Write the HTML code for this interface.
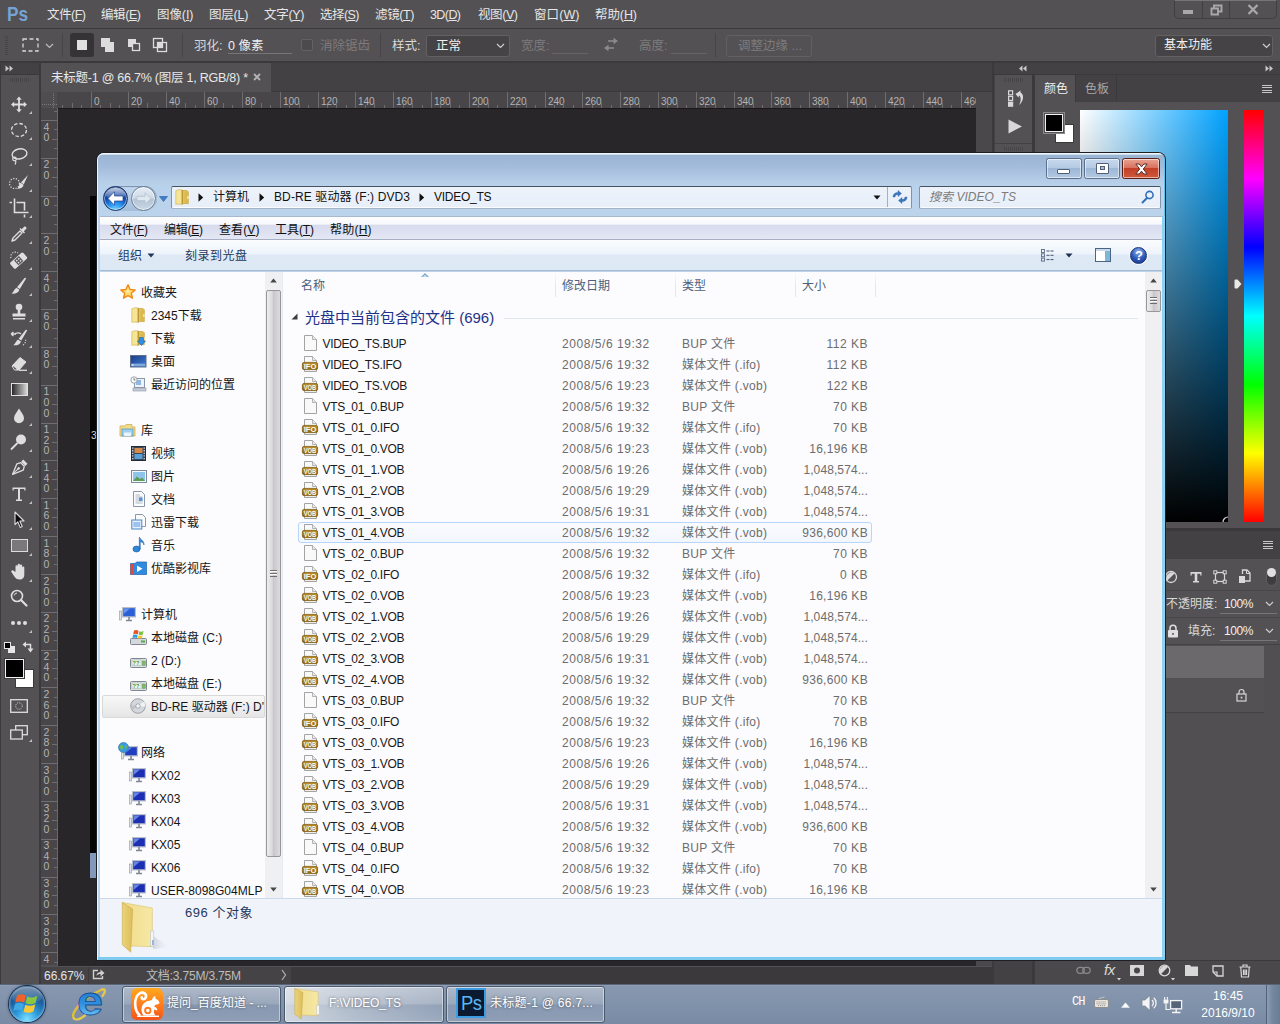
<!DOCTYPE html><html lang="zh-CN"><head><meta charset="utf-8"><title>Photoshop - VIDEO_TS</title><style>
*{box-sizing:border-box;margin:0;padding:0}
html,body{width:1280px;height:1024px;overflow:hidden;background:#535153}
body{position:relative;font-family:"Liberation Sans","Noto Sans CJK SC",sans-serif;font-size:12px;color:#ddd}
.a{position:absolute}
.t{position:absolute;white-space:nowrap;line-height:1}
svg{position:absolute;overflow:visible}
/* photoshop */
#menubar{left:0;top:0;width:1280px;height:28px;background:#535153}
#optbar{left:0;top:29px;width:1280px;height:32px;background:#535153}
.mi{top:9px;font-size:12.5px;color:#e6e6e6}
.ol{font-size:12.5px;color:#d8d8d8}
.dim{color:#7d7b7d}
/* explorer */
#win{left:97px;top:153px;width:1069px;height:807px;border-radius:7px 7px 1px 1px;background:#bfd6ea;overflow:hidden}
.nv{font-size:12px;color:#151515;}
.fr{font-size:12px;color:#1a1a1a;height:21px;line-height:21px}
.g{color:#6d6d6d}
</style></head><body>
<div class="a" id="menubar"></div>
<div class="a" style="left:0;top:28px;width:1280px;height:1px;background:#3b393b"></div>
<div class="t" style="left:7px;top:3px;font-size:21px;font-weight:bold;color:#74a3d4;transform:scaleX(0.82);transform-origin:0 0">Ps</div>
<div class="t mi" style="left:47px;letter-spacing:-0.50px">文件(<u>F</u>)</div>
<div class="t mi" style="left:101px;letter-spacing:-0.42px">编辑(<u>E</u>)</div>
<div class="t mi" style="left:157px;letter-spacing:-0.08px">图像(<u>I</u>)</div>
<div class="t mi" style="left:209px;letter-spacing:-0.20px">图层(<u>L</u>)</div>
<div class="t mi" style="left:264px;letter-spacing:-0.30px">文字(<u>Y</u>)</div>
<div class="t mi" style="left:320px;letter-spacing:-0.55px">选择(<u>S</u>)</div>
<div class="t mi" style="left:375px;letter-spacing:-0.37px">滤镜(<u>T</u>)</div>
<div class="t mi" style="left:430px;letter-spacing:-0.59px">3D(<u>D</u>)</div>
<div class="t mi" style="left:478px;letter-spacing:-0.42px">视图(<u>V</u>)</div>
<div class="t mi" style="left:534px;letter-spacing:0.09px">窗口(<u>W</u>)</div>
<div class="t mi" style="left:595px;letter-spacing:-0.09px">帮助(<u>H</u>)</div>
<div class="a" style="left:1174px;top:0;width:103px;height:19px;border:1px solid #403e40;border-top:1px solid #777577;border-radius:0 0 5px 5px;background:#535153"></div>
<div class="a" style="left:1202px;top:1px;width:1px;height:17px;background:#403e40"></div>
<div class="a" style="left:1229px;top:1px;width:1px;height:17px;background:#403e40"></div>
<div class="a" style="left:1183px;top:10px;width:10px;height:4px;background:#a9a7a9"></div>
<svg style="left:1210px;top:4px" width="13" height="12"><path d="M4 4V1.5H11.5V7.5H8.5M1.5 4.5H8V10.5H1.5Z" fill="none" stroke="#a9a7a9" stroke-width="1.9"/></svg>
<svg style="left:1247px;top:4px" width="12" height="11"><path d="M1.5 1L10.5 10M10.5 1L1.5 10" stroke="#a9a7a9" stroke-width="2.3"/></svg>
<div class="a" id="optbar"></div>
<div class="a" style="left:0;top:61px;width:1280px;height:2px;background:#3b393b"></div>
<div class="a" style="left:5px;top:36px;width:3px;height:19px;background:repeating-linear-gradient(#474547 0 1px,#535153 1px 2px)"></div>
<svg style="left:22px;top:38px" width="18" height="15"><rect x="1" y="1" width="15" height="12" fill="none" stroke="#d6d6d6" stroke-width="1.3" stroke-dasharray="4 2.5"/></svg>
<svg style="left:45px;top:43px" width="9" height="6"><path d="M1 1L4.5 4.5L8 1" fill="none" stroke="#bcbcbc" stroke-width="1.2"/></svg>
<div class="a" style="left:62px;top:33px;width:1px;height:24px;background:#474547"></div>
<div class="a" style="left:70px;top:33px;width:24px;height:24px;background:#353335;border-radius:3px"></div>
<div class="a" style="left:77px;top:40px;width:10px;height:10px;background:#e0e0e0"></div>
<svg style="left:100px;top:37px" width="16" height="16"><path d="M1 1H10V5H14V15H5V10H1Z" fill="#dcdcdc"/></svg>
<svg style="left:127px;top:38px" width="14" height="14"><rect x="1" y="1" width="8" height="8" fill="#dcdcdc"/><rect x="5.5" y="5.5" width="7" height="7" fill="#535153" stroke="#dcdcdc" stroke-width="1.3"/></svg>
<svg style="left:152px;top:37px" width="16" height="16"><rect x="1.5" y="1.5" width="9" height="9" fill="none" stroke="#dcdcdc" stroke-width="1.3"/><rect x="5.5" y="5.5" width="9" height="9" fill="none" stroke="#dcdcdc" stroke-width="1.3"/><rect x="6" y="6" width="4" height="4" fill="#dcdcdc"/></svg>
<div class="a" style="left:182px;top:33px;width:1px;height:24px;background:#474547"></div>
<div class="t ol" style="left:194px;top:40px">羽化:</div>
<div class="t ol" style="left:228px;top:40px;color:#efefef">0 像素</div>
<div class="a" style="left:228px;top:53px;width:64px;height:1px;background:#777577"></div>
<div class="a" style="left:301px;top:39px;width:12px;height:12px;border:1px solid #636163;border-radius:2px;background:#4c4a4c"></div>
<div class="t ol dim" style="left:320px;top:40px">消除锯齿</div>
<div class="a" style="left:380px;top:33px;width:1px;height:24px;background:#474547"></div>
<div class="t ol" style="left:392px;top:40px">样式:</div>
<div class="a" style="left:426px;top:35px;width:84px;height:22px;border:1px solid #626062;border-radius:3px;background:#454345"></div>
<div class="t ol" style="left:436px;top:40px;color:#f0f0f0">正常</div>
<svg style="left:496px;top:43px" width="9" height="6"><path d="M1 1L4.5 4.5L8 1" fill="none" stroke="#cfcfcf" stroke-width="1.2"/></svg>
<div class="t ol dim" style="left:521px;top:40px">宽度:</div>
<div class="a" style="left:552px;top:53px;width:36px;height:1px;background:#656365"></div>
<svg style="left:603px;top:37px" width="16" height="15"><path d="M5 4H11" stroke="#8b898b" stroke-width="1.6"/><path d="M10.5 0.8L15 4L10.5 7.2Z" fill="#8b898b"/><path d="M5 11H11" stroke="#8b898b" stroke-width="1.6"/><path d="M5.5 7.8L1 11L5.5 14.2Z" fill="#8b898b"/></svg>
<div class="t ol dim" style="left:639px;top:40px">高度:</div>
<div class="a" style="left:671px;top:53px;width:36px;height:1px;background:#656365"></div>
<div class="a" style="left:715px;top:33px;width:1px;height:24px;background:#474547"></div>
<div class="a" style="left:726px;top:35px;width:86px;height:22px;border:1px solid #626062;border-radius:3px"></div>
<div class="t ol dim" style="left:738px;top:40px">调整边缘 ...</div>
<div class="a" style="left:1155px;top:35px;width:118px;height:22px;border:1px solid #626062;border-radius:3px;background:#454345"></div>
<div class="t" style="left:1164px;top:39px;font-size:12px;color:#f0f0f0;letter-spacing:-0.01px">基本功能</div>
<svg style="left:1262px;top:43px" width="9" height="6"><path d="M1 1L4.5 4.5L8 1" fill="none" stroke="#cfcfcf" stroke-width="1.2"/></svg>
<div class="a" style="left:0;top:63px;width:41px;height:921px;background:#3b393b"></div>
<div class="a" style="left:1px;top:63px;width:38px;height:11px;background:#434143"></div>
<div class="a" style="left:1px;top:75px;width:38px;height:909px;background:#535153"></div>
<svg style="left:5px;top:65px" width="9" height="7"><path d="M0.5 0.5L4 3.5L0.5 6.5ZM4.5 0.5L8 3.5L4.5 6.5Z" fill="#c8c8c8"/></svg>
<div class="a" style="left:10px;top:78px;width:19px;height:4px;background:repeating-linear-gradient(90deg,#474547 0 1px,#535153 1px 2px)"></div>
<div class="a" style="left:41px;top:63px;width:952px;height:28px;background:#434143"></div>
<div class="a" style="left:41px;top:63px;width:230px;height:29px;background:#535153"></div>
<div class="a" style="left:271px;top:91px;width:722px;height:1px;background:#3b393b"></div>
<div class="t" style="left:51px;top:72px;font-size:12.5px;color:#e8e8e8;letter-spacing:-0.24px">未标题-1 @ 66.7% (图层 1, RGB/8) *</div>
<svg style="left:253px;top:73px" width="8" height="8"><path d="M1 1L7 7M7 1L1 7" stroke="#b4b4b4" stroke-width="1.8"/></svg>
<div class="a" style="left:41px;top:92px;width:935px;height:16px;background:#484648"></div>
<div class="a" style="left:41px;top:92px;width:16px;height:16px;background:#4f4d4f"></div>
<div class="a" style="left:41px;top:108px;width:17px;height:857px;background:#484648"></div>
<div class="a" style="left:57px;top:108px;width:1px;height:857px;background:#6a686a"></div>
<div class="a" style="left:58px;top:108px;width:918px;height:858px;background:#282628"></div>
<div class="a" style="left:58px;top:108px;width:918px;height:1px;background:#1a181a"></div>
<div class="a" style="left:90px;top:196px;width:20px;height:657px;background:#050505"></div>
<div class="a" style="left:90px;top:853px;width:6px;height:25px;background:#8397b8"></div>
<div class="t" style="left:91px;top:431px;font-size:10px;color:#d8d8d8">3</div>
<div class="a" style="left:42px;top:104px;width:16px;height:1px;background:repeating-linear-gradient(90deg,#7a787a 0 1px,transparent 1px 2px)"></div>
<div class="a" style="left:53px;top:93px;width:1px;height:15px;background:repeating-linear-gradient(#7a787a 0 1px,transparent 1px 2px)"></div>
<style>#hr i,#vr i{position:absolute;width:1px;background:#6f6d6f}#vr i{height:1px}#hr b,#vr b{position:absolute;font-weight:normal;font-size:10px;line-height:1;color:#b4b2b4;top:97px}#vr b{top:auto;left:43px;width:7px;text-align:center;line-height:10.6px;font-size:10.5px}</style>
<div id="hr" class="a" style="left:0;top:0;width:976px;height:108px;overflow:hidden"><i style="left:62px;top:105px;height:3px"></i><i style="left:72px;top:103px;height:5px"></i><i style="left:81px;top:105px;height:3px"></i><i style="left:91px;top:92px;height:16px"></i><b style="left:94px">0</b><i style="left:100px;top:105px;height:3px"></i><i style="left:110px;top:103px;height:5px"></i><i style="left:119px;top:105px;height:3px"></i><i style="left:128px;top:92px;height:16px"></i><b style="left:131px">20</b><i style="left:138px;top:105px;height:3px"></i><i style="left:147px;top:103px;height:5px"></i><i style="left:157px;top:105px;height:3px"></i><i style="left:166px;top:92px;height:16px"></i><b style="left:169px">40</b><i style="left:176px;top:105px;height:3px"></i><i style="left:185px;top:103px;height:5px"></i><i style="left:195px;top:105px;height:3px"></i><i style="left:204px;top:92px;height:16px"></i><b style="left:207px">60</b><i style="left:214px;top:105px;height:3px"></i><i style="left:223px;top:103px;height:5px"></i><i style="left:232px;top:105px;height:3px"></i><i style="left:242px;top:92px;height:16px"></i><b style="left:245px">80</b><i style="left:251px;top:105px;height:3px"></i><i style="left:261px;top:103px;height:5px"></i><i style="left:270px;top:105px;height:3px"></i><i style="left:280px;top:92px;height:16px"></i><b style="left:283px">100</b><i style="left:289px;top:105px;height:3px"></i><i style="left:299px;top:103px;height:5px"></i><i style="left:308px;top:105px;height:3px"></i><i style="left:318px;top:92px;height:16px"></i><b style="left:321px">120</b><i style="left:327px;top:105px;height:3px"></i><i style="left:336px;top:103px;height:5px"></i><i style="left:346px;top:105px;height:3px"></i><i style="left:355px;top:92px;height:16px"></i><b style="left:358px">140</b><i style="left:365px;top:105px;height:3px"></i><i style="left:374px;top:103px;height:5px"></i><i style="left:384px;top:105px;height:3px"></i><i style="left:393px;top:92px;height:16px"></i><b style="left:396px">160</b><i style="left:403px;top:105px;height:3px"></i><i style="left:412px;top:103px;height:5px"></i><i style="left:422px;top:105px;height:3px"></i><i style="left:431px;top:92px;height:16px"></i><b style="left:434px">180</b><i style="left:440px;top:105px;height:3px"></i><i style="left:450px;top:103px;height:5px"></i><i style="left:459px;top:105px;height:3px"></i><i style="left:469px;top:92px;height:16px"></i><b style="left:472px">200</b><i style="left:478px;top:105px;height:3px"></i><i style="left:488px;top:103px;height:5px"></i><i style="left:497px;top:105px;height:3px"></i><i style="left:507px;top:92px;height:16px"></i><b style="left:510px">220</b><i style="left:516px;top:105px;height:3px"></i><i style="left:526px;top:103px;height:5px"></i><i style="left:535px;top:105px;height:3px"></i><i style="left:545px;top:92px;height:16px"></i><b style="left:548px">240</b><i style="left:554px;top:105px;height:3px"></i><i style="left:563px;top:103px;height:5px"></i><i style="left:573px;top:105px;height:3px"></i><i style="left:582px;top:92px;height:16px"></i><b style="left:585px">260</b><i style="left:592px;top:105px;height:3px"></i><i style="left:601px;top:103px;height:5px"></i><i style="left:611px;top:105px;height:3px"></i><i style="left:620px;top:92px;height:16px"></i><b style="left:623px">280</b><i style="left:630px;top:105px;height:3px"></i><i style="left:639px;top:103px;height:5px"></i><i style="left:649px;top:105px;height:3px"></i><i style="left:658px;top:92px;height:16px"></i><b style="left:661px">300</b><i style="left:667px;top:105px;height:3px"></i><i style="left:677px;top:103px;height:5px"></i><i style="left:686px;top:105px;height:3px"></i><i style="left:696px;top:92px;height:16px"></i><b style="left:699px">320</b><i style="left:705px;top:105px;height:3px"></i><i style="left:715px;top:103px;height:5px"></i><i style="left:724px;top:105px;height:3px"></i><i style="left:734px;top:92px;height:16px"></i><b style="left:737px">340</b><i style="left:743px;top:105px;height:3px"></i><i style="left:753px;top:103px;height:5px"></i><i style="left:762px;top:105px;height:3px"></i><i style="left:771px;top:92px;height:16px"></i><b style="left:774px">360</b><i style="left:781px;top:105px;height:3px"></i><i style="left:790px;top:103px;height:5px"></i><i style="left:800px;top:105px;height:3px"></i><i style="left:809px;top:92px;height:16px"></i><b style="left:812px">380</b><i style="left:819px;top:105px;height:3px"></i><i style="left:828px;top:103px;height:5px"></i><i style="left:838px;top:105px;height:3px"></i><i style="left:847px;top:92px;height:16px"></i><b style="left:850px">400</b><i style="left:857px;top:105px;height:3px"></i><i style="left:866px;top:103px;height:5px"></i><i style="left:875px;top:105px;height:3px"></i><i style="left:885px;top:92px;height:16px"></i><b style="left:888px">420</b><i style="left:894px;top:105px;height:3px"></i><i style="left:904px;top:103px;height:5px"></i><i style="left:913px;top:105px;height:3px"></i><i style="left:923px;top:92px;height:16px"></i><b style="left:926px">440</b><i style="left:932px;top:105px;height:3px"></i><i style="left:942px;top:103px;height:5px"></i><i style="left:951px;top:105px;height:3px"></i><i style="left:961px;top:92px;height:16px"></i><b style="left:964px">460</b><i style="left:970px;top:105px;height:3px"></i></div>
<div id="vr" class="a" style="left:0;top:108px;width:58px;height:857px;overflow:hidden"><div style="position:absolute;left:0;top:-108px"><i style="top:111px;left:54px;width:3px"></i><i style="top:120px;left:41px;width:17px"></i><b style="top:121.6px">4<br>0</b><i style="top:129px;left:54px;width:3px"></i><i style="top:139px;left:52px;width:5px"></i><i style="top:148px;left:54px;width:3px"></i><i style="top:158px;left:41px;width:17px"></i><b style="top:159.4px">2<br>0</b><i style="top:167px;left:54px;width:3px"></i><i style="top:177px;left:52px;width:5px"></i><i style="top:186px;left:54px;width:3px"></i><i style="top:196px;left:41px;width:17px"></i><b style="top:197.3px">0</b><i style="top:205px;left:54px;width:3px"></i><i style="top:215px;left:52px;width:5px"></i><i style="top:224px;left:54px;width:3px"></i><i style="top:233px;left:41px;width:17px"></i><b style="top:235.1px">2<br>0</b><i style="top:243px;left:54px;width:3px"></i><i style="top:252px;left:52px;width:5px"></i><i style="top:262px;left:54px;width:3px"></i><i style="top:271px;left:41px;width:17px"></i><b style="top:272.9px">4<br>0</b><i style="top:281px;left:54px;width:3px"></i><i style="top:290px;left:52px;width:5px"></i><i style="top:300px;left:54px;width:3px"></i><i style="top:309px;left:41px;width:17px"></i><b style="top:310.7px">6<br>0</b><i style="top:319px;left:54px;width:3px"></i><i style="top:328px;left:52px;width:5px"></i><i style="top:338px;left:54px;width:3px"></i><i style="top:347px;left:41px;width:17px"></i><b style="top:348.6px">8<br>0</b><i style="top:356px;left:54px;width:3px"></i><i style="top:366px;left:52px;width:5px"></i><i style="top:375px;left:54px;width:3px"></i><i style="top:385px;left:41px;width:17px"></i><b style="top:386.4px">1<br>0<br>0</b><i style="top:394px;left:54px;width:3px"></i><i style="top:404px;left:52px;width:5px"></i><i style="top:413px;left:54px;width:3px"></i><i style="top:423px;left:41px;width:17px"></i><b style="top:424.2px">1<br>2<br>0</b><i style="top:432px;left:54px;width:3px"></i><i style="top:442px;left:52px;width:5px"></i><i style="top:451px;left:54px;width:3px"></i><i style="top:460px;left:41px;width:17px"></i><b style="top:462.0px">1<br>4<br>0</b><i style="top:470px;left:54px;width:3px"></i><i style="top:479px;left:52px;width:5px"></i><i style="top:489px;left:54px;width:3px"></i><i style="top:498px;left:41px;width:17px"></i><b style="top:499.9px">1<br>6<br>0</b><i style="top:508px;left:54px;width:3px"></i><i style="top:517px;left:52px;width:5px"></i><i style="top:527px;left:54px;width:3px"></i><i style="top:536px;left:41px;width:17px"></i><b style="top:537.7px">1<br>8<br>0</b><i style="top:546px;left:54px;width:3px"></i><i style="top:555px;left:52px;width:5px"></i><i style="top:564px;left:54px;width:3px"></i><i style="top:574px;left:41px;width:17px"></i><b style="top:575.5px">2<br>0<br>0</b><i style="top:583px;left:54px;width:3px"></i><i style="top:593px;left:52px;width:5px"></i><i style="top:602px;left:54px;width:3px"></i><i style="top:612px;left:41px;width:17px"></i><b style="top:613.3px">2<br>2<br>0</b><i style="top:621px;left:54px;width:3px"></i><i style="top:631px;left:52px;width:5px"></i><i style="top:640px;left:54px;width:3px"></i><i style="top:650px;left:41px;width:17px"></i><b style="top:651.2px">2<br>4<br>0</b><i style="top:659px;left:54px;width:3px"></i><i style="top:668px;left:52px;width:5px"></i><i style="top:678px;left:54px;width:3px"></i><i style="top:687px;left:41px;width:17px"></i><b style="top:689.0px">2<br>6<br>0</b><i style="top:697px;left:54px;width:3px"></i><i style="top:706px;left:52px;width:5px"></i><i style="top:716px;left:54px;width:3px"></i><i style="top:725px;left:41px;width:17px"></i><b style="top:726.8px">2<br>8<br>0</b><i style="top:735px;left:54px;width:3px"></i><i style="top:744px;left:52px;width:5px"></i><i style="top:754px;left:54px;width:3px"></i><i style="top:763px;left:41px;width:17px"></i><b style="top:764.6px">3<br>0<br>0</b><i style="top:773px;left:54px;width:3px"></i><i style="top:782px;left:52px;width:5px"></i><i style="top:791px;left:54px;width:3px"></i><i style="top:801px;left:41px;width:17px"></i><b style="top:802.5px">3<br>2<br>0</b><i style="top:810px;left:54px;width:3px"></i><i style="top:820px;left:52px;width:5px"></i><i style="top:829px;left:54px;width:3px"></i><i style="top:839px;left:41px;width:17px"></i><b style="top:840.3px">3<br>4<br>0</b><i style="top:848px;left:54px;width:3px"></i><i style="top:858px;left:52px;width:5px"></i><i style="top:867px;left:54px;width:3px"></i><i style="top:877px;left:41px;width:17px"></i><b style="top:878.1px">3<br>6<br>0</b><i style="top:886px;left:54px;width:3px"></i><i style="top:895px;left:52px;width:5px"></i><i style="top:905px;left:54px;width:3px"></i><i style="top:914px;left:41px;width:17px"></i><b style="top:916.0px">3<br>8<br>0</b><i style="top:924px;left:54px;width:3px"></i><i style="top:933px;left:52px;width:5px"></i><i style="top:943px;left:54px;width:3px"></i><i style="top:952px;left:41px;width:17px"></i><b style="top:953.8px">4<br>0<br>0</b><i style="top:962px;left:54px;width:3px"></i></div></div>
<div class="a" style="left:976px;top:92px;width:17px;height:874px;background:#4a484a"></div>
<div class="a" style="left:992px;top:63px;width:2px;height:921px;background:#3b393b"></div>
<div class="a" style="left:41px;top:967px;width:952px;height:17px;background:#3b393b"></div>
<div class="a" style="left:41px;top:967px;width:250px;height:17px;background:#454345"></div>
<div class="a" style="left:88px;top:967px;width:1px;height:17px;background:#3b393b"></div>
<div class="t" style="left:44px;top:970px;font-size:12px;color:#e6e6e6;letter-spacing:-0.04px">66.67%</div>
<svg style="left:92px;top:968px" width="13" height="12"><path d="M6 2.5H1.5V10.5H10.5V8" fill="none" stroke="#d0d0d0" stroke-width="1.4"/><path d="M4.5 8C4.5 5 6.5 4 8.5 4V1.5L12.5 5L8.5 8.5V6C7 6 5.5 6.5 4.5 8Z" fill="#d0d0d0"/></svg>
<div class="t" style="left:146px;top:970px;font-size:12px;color:#bdbdbd;letter-spacing:-0.18px">文档:3.75M/3.75M</div>
<svg style="left:281px;top:969px" width="6" height="12"><path d="M1 1L4.5 6L1 11" fill="none" stroke="#b4b4b4" stroke-width="1.2"/></svg>
<svg style="left:9px;top:94px" width="20" height="20" viewBox="0 0 20 20"><path d="M10 2.5L12.7 5.7H10.9V9.6H14.8V7.8L18 10.5L14.8 13.2V11.4H10.9V15.3H12.7L10 18.5L7.3 15.3H9.1V11.4H5.2V13.2L2 10.5L5.2 7.8V9.6H9.1V5.7H7.3Z" fill="#dedede"/></svg>
<svg style="left:29px;top:111px" width="3" height="3"><path d="M3 0V3H0Z" fill="#c0c0c0"/></svg>
<svg style="left:9px;top:120px" width="20" height="20" viewBox="0 0 20 20"><ellipse cx="10" cy="10" rx="7.5" ry="6.5" fill="none" stroke="#dedede" stroke-width="1.3" stroke-dasharray="3.5 2"/></svg>
<svg style="left:29px;top:137px" width="3" height="3"><path d="M3 0V3H0Z" fill="#c0c0c0"/></svg>
<svg style="left:9px;top:146px" width="20" height="20" viewBox="0 0 20 20"><ellipse cx="10.5" cy="8" rx="7.5" ry="5" fill="none" stroke="#dedede" stroke-width="1.4" transform="rotate(-12 10 8)"/><circle cx="5.5" cy="13" r="1.8" fill="none" stroke="#dedede" stroke-width="1.2"/><path d="M6.5 14.5C7.5 16 6.5 17.5 6 18.5" fill="none" stroke="#dedede" stroke-width="1.2"/></svg>
<svg style="left:29px;top:163px" width="3" height="3"><path d="M3 0V3H0Z" fill="#c0c0c0"/></svg>
<svg style="left:9px;top:172px" width="20" height="20" viewBox="0 0 20 20"><circle cx="5.5" cy="11.5" r="5" fill="none" stroke="#dedede" stroke-width="1.3" stroke-dasharray="1.2 1.5"/><path d="M19 3L14.8 12.2L12 10.5Z" fill="#dedede"/><path d="M11.5 10.8L14.6 12.8C14.2 16 11.5 17 8 16.8C10 15.5 10 12.5 11.5 10.8Z" fill="#dedede"/></svg>
<svg style="left:29px;top:189px" width="3" height="3"><path d="M3 0V3H0Z" fill="#c0c0c0"/></svg>
<svg style="left:9px;top:198px" width="20" height="20" viewBox="0 0 20 20"><path d="M5.5 0.5V14.5H19.5M0.5 4.5H3M7.5 4.5H15.5V12.5M15.5 16.5V19.5" fill="none" stroke="#dedede" stroke-width="1.6"/></svg>
<svg style="left:29px;top:215px" width="3" height="3"><path d="M3 0V3H0Z" fill="#c0c0c0"/></svg>
<svg style="left:9px;top:224px" width="20" height="20" viewBox="0 0 20 20"><path d="M3 17L4 14L11 7L13 9L6 16Z" fill="none" stroke="#dedede" stroke-width="1.4" stroke-linejoin="round"/><path d="M10.5 5L15 9.5L16 8.5L14.8 7.3L17.5 4.6A1.9 1.9 0 0 0 15.4 2.5L12.7 5.2L11.5 4Z" fill="#dedede"/></svg>
<svg style="left:29px;top:241px" width="3" height="3"><path d="M3 0V3H0Z" fill="#c0c0c0"/></svg>
<svg style="left:9px;top:250px" width="20" height="20" viewBox="0 0 20 20"><g transform="translate(9.6 10.6) rotate(-42) scale(1.08) translate(-11 -11.2)"><rect x="3" y="7.5" width="16" height="7.5" rx="1.5" fill="#dedede"/><rect x="8" y="8.3" width="6" height="6" fill="#535153"/><rect x="9" y="9.3" width="1.5" height="1.5" fill="#dedede"/><rect x="11.5" y="9.3" width="1.5" height="1.5" fill="#dedede"/><rect x="9" y="11.8" width="1.5" height="1.5" fill="#dedede"/><rect x="11.5" y="11.8" width="1.5" height="1.5" fill="#dedede"/></g><path d="M2 8A4.5 4.5 0 0 1 9 3" fill="none" stroke="#dedede" stroke-width="1.2" stroke-dasharray="1.2 1.4"/></svg>
<svg style="left:29px;top:267px" width="3" height="3"><path d="M3 0V3H0Z" fill="#c0c0c0"/></svg>
<svg style="left:9px;top:276px" width="20" height="20" viewBox="0 0 20 20"><path d="M17.3 2.2L10.8 13L8 11.2L15.8 1.8Z" fill="#dedede"/><path d="M7.4 11.8L10.4 13.8C9.6 17 6 18 2.5 17.6C4.8 16 5.2 13.2 7.4 11.8Z" fill="#dedede"/></svg>
<svg style="left:29px;top:293px" width="3" height="3"><path d="M3 0V3H0Z" fill="#c0c0c0"/></svg>
<svg style="left:9px;top:302px" width="20" height="20" viewBox="0 0 20 20"><circle cx="10" cy="5" r="3.3" fill="#dedede"/><path d="M8.7 7H11.3V11.5H16.5V14.5H3.5V11.5H8.7Z" fill="#dedede"/><rect x="4" y="16" width="12" height="1.5" fill="#dedede"/></svg>
<svg style="left:29px;top:319px" width="3" height="3"><path d="M3 0V3H0Z" fill="#c0c0c0"/></svg>
<svg style="left:9px;top:328px" width="20" height="20" viewBox="0 0 20 20"><path d="M18.3 2.2L12.3 12.5L9.7 10.8L16.8 1.8Z" fill="#dedede"/><path d="M9 11.5L12 13.4C11.2 16.6 7.8 17.6 4.3 17.2C6.6 15.6 7 12.9 9 11.5Z" fill="#dedede"/><path d="M2 6H7M2 6L4.5 4M2 6L4.5 8" fill="none" stroke="#dedede" stroke-width="1.3"/><path d="M6 5.5C9 4.5 11 5 12 6" fill="none" stroke="#dedede" stroke-width="1.2"/><path d="M14 17C16 16 17 13.5 16.5 11" fill="none" stroke="#dedede" stroke-width="1.1" stroke-dasharray="1.2 1.3"/></svg>
<svg style="left:29px;top:345px" width="3" height="3"><path d="M3 0V3H0Z" fill="#c0c0c0"/></svg>
<svg style="left:9px;top:354px" width="20" height="20" viewBox="0 0 20 20"><path d="M3 12L11 3.5L17 8L10 16H5.5Z" fill="#dedede"/><path d="M4.3 12.3L7.8 15.2L6.5 16H5.5L3 14Z" fill="#535153"/><path d="M3 12L11 3.5L17 8L10 16H5.5Z" fill="none" stroke="#dedede" stroke-width="1"/><path d="M10 16.3H18" stroke="#dedede" stroke-width="1.3"/></svg>
<svg style="left:29px;top:371px" width="3" height="3"><path d="M3 0V3H0Z" fill="#c0c0c0"/></svg>
<div class="a" style="left:11px;top:383px;width:17px;height:13px;border:1px solid #e0e0e0;background:linear-gradient(90deg,#2a282a,#d8d8d8)"></div>
<svg style="left:29px;top:397px" width="3" height="3"><path d="M3 0V3H0Z" fill="#c0c0c0"/></svg>
<svg style="left:9px;top:406px" width="20" height="20" viewBox="0 0 20 20"><path d="M10 2.5C12 6 15 9 15 12.3A5 5 0 0 1 5 12.3C5 9 8 6 10 2.5Z" fill="#dedede"/></svg>
<svg style="left:29px;top:423px" width="3" height="3"><path d="M3 0V3H0Z" fill="#c0c0c0"/></svg>
<svg style="left:9px;top:432px" width="20" height="20" viewBox="0 0 20 20"><circle cx="12" cy="7.5" r="5" fill="#dedede"/><path d="M8.5 11L2 17.5" stroke="#dedede" stroke-width="1.8"/></svg>
<svg style="left:29px;top:449px" width="3" height="3"><path d="M3 0V3H0Z" fill="#c0c0c0"/></svg>
<svg style="left:9px;top:458px" width="20" height="20" viewBox="0 0 20 20"><g transform="rotate(45 10 10)"><path d="M10 19L5.5 8.5L7.5 5H12.5L14.5 8.5Z" fill="none" stroke="#dedede" stroke-width="1.3" stroke-linejoin="round"/><rect x="7" y="1" width="6" height="3" fill="#dedede"/><path d="M10 19V11" stroke="#dedede" stroke-width="1"/><circle cx="10" cy="10.5" r="1.3" fill="#dedede"/></g></svg>
<svg style="left:29px;top:475px" width="3" height="3"><path d="M3 0V3H0Z" fill="#c0c0c0"/></svg>
<svg style="left:9px;top:484px" width="20" height="20" viewBox="0 0 20 20"><path d="M3.5 3.5H16.5V6.5H15.3V5H11V15.5H13V17H7V15.5H9V5H4.7V6.5H3.5Z" fill="#dedede"/></svg>
<svg style="left:29px;top:501px" width="3" height="3"><path d="M3 0V3H0Z" fill="#c0c0c0"/></svg>
<svg style="left:9px;top:510px" width="20" height="20" viewBox="0 0 20 20"><path d="M6 2L15 11H10.8L13.2 16.5L11.2 17.4L8.8 11.9L6 14.6Z" fill="#0c0c0c" stroke="#dedede" stroke-width="1.1" stroke-linejoin="round"/></svg>
<svg style="left:29px;top:527px" width="3" height="3"><path d="M3 0V3H0Z" fill="#c0c0c0"/></svg>
<div class="a" style="left:11px;top:539px;width:17px;height:13px;border:1px solid #dcdcdc;background:#7a787a"></div>
<svg style="left:29px;top:553px" width="3" height="3"><path d="M3 0V3H0Z" fill="#c0c0c0"/></svg>
<svg style="left:9px;top:562px" width="20" height="20" viewBox="0 0 20 20"><path d="M6.5 10V4.3A1.1 1.1 0 0 1 8.7 4.3V9V2.8A1.1 1.1 0 0 1 10.9 2.8V9V3.6A1.1 1.1 0 0 1 13.1 3.6V9.5V5.5A1.1 1.1 0 0 1 15.3 5.5V12.5C15.3 16 13.5 17.5 10.8 17.5C8 17.5 6.5 16.5 5 14L2.2 9.7A1.2 1.2 0 0 1 4.2 8.6Z" fill="#dedede"/></svg>
<svg style="left:29px;top:579px" width="3" height="3"><path d="M3 0V3H0Z" fill="#c0c0c0"/></svg>
<svg style="left:9px;top:588px" width="20" height="20" viewBox="0 0 20 20"><circle cx="8" cy="8" r="5.5" fill="none" stroke="#dedede" stroke-width="1.6"/><path d="M12 12L17.5 17.5" stroke="#dedede" stroke-width="2.2" stroke-linecap="round"/><path d="M5.2 7.5A3 3 0 0 1 8 5" fill="none" stroke="#dedede" stroke-width="1"/></svg>
<svg style="left:9px;top:620px" width="20" height="6"><circle cx="4" cy="3" r="2" fill="#dedede"/><circle cx="10" cy="3" r="2" fill="#dedede"/><circle cx="16" cy="3" r="2" fill="#dedede"/></svg>
<svg style="left:29px;top:630px" width="3" height="3"><path d="M3 0V3H0Z" fill="#c0c0c0"/></svg>
<div class="a" style="left:8px;top:646px;width:7px;height:7px;background:#e6e6e6"></div>
<div class="a" style="left:4px;top:642px;width:7px;height:7px;background:#000;border:1px solid #e6e6e6"></div>
<svg style="left:22px;top:640px" width="12" height="13"><path d="M3.5 4.5H8.5V9" fill="none" stroke="#dedede" stroke-width="1.5"/><path d="M0.5 4.5L4 1.5V7.5ZM8.5 12.5L5.5 8.5H11.5Z" fill="#dedede"/></svg>
<div class="a" style="left:15px;top:669px;width:19px;height:19px;background:#fff;border:1px solid #3b393b"></div>
<div class="a" style="left:5px;top:659px;width:19px;height:19px;background:#000;border:1px solid #f0f0f0;outline:1px solid #3b393b"></div>
<svg style="left:10px;top:699px" width="18" height="14"><rect x="0.7" y="0.7" width="16.6" height="12.6" fill="none" stroke="#dedede" stroke-width="1.3"/><circle cx="9" cy="7" r="3.3" fill="none" stroke="#dedede" stroke-width="1" stroke-dasharray="1 1.2"/></svg>
<svg style="left:10px;top:725px" width="18" height="15"><rect x="5.7" y="0.7" width="11.6" height="9" fill="none" stroke="#dedede" stroke-width="1.3"/><rect x="0.7" y="5" width="11.6" height="9" fill="#535153" stroke="#dedede" stroke-width="1.3"/></svg>
<svg style="left:29px;top:739px" width="3" height="3"><path d="M3 0V3H0Z" fill="#c0c0c0"/></svg>
<div class="a" style="left:994px;top:63px;width:286px;height:921px;background:#434143"></div>
<svg style="left:1018px;top:65px" width="9" height="7"><path d="M8.5 0.5L5 3.5L8.5 6.5ZM4.5 0.5L1 3.5L4.5 6.5Z" fill="#c8c8c8"/></svg>
<svg style="left:1265px;top:65px" width="9" height="7"><path d="M0.5 0.5L4 3.5L0.5 6.5ZM4.5 0.5L8 3.5L4.5 6.5Z" fill="#c8c8c8"/></svg>
<div class="a" style="left:994px;top:74px;width:286px;height:1px;background:#3b393b"></div>
<div class="a" style="left:995px;top:75px;width:37px;height:68px;background:#535153"></div>
<div class="a" style="left:995px;top:144px;width:37px;height:20px;background:#535153"></div>
<div class="a" style="left:1032px;top:75px;width:3px;height:909px;background:#3b393b"></div>
<div class="a" style="left:1004px;top:78px;width:19px;height:4px;background:repeating-linear-gradient(90deg,#474547 0 1px,#535153 1px 2px)"></div>
<div class="a" style="left:1004px;top:147px;width:19px;height:4px;background:repeating-linear-gradient(90deg,#474547 0 1px,#535153 1px 2px)"></div>
<svg style="left:1007px;top:89px" width="18" height="19"><rect x="1.6" y="1.8" width="4" height="4" fill="none" stroke="#d8d8d8" stroke-width="1.2"/><rect x="1.6" y="7.4" width="4" height="4" fill="none" stroke="#d8d8d8" stroke-width="1.2"/><rect x="1" y="12.6" width="5.2" height="5.2" fill="#d8d8d8"/><path d="M8.5 5L13.5 1.5V3.6C17 5 17.3 11.5 12 16C14.3 11.8 14 7.6 12.2 6.4L11.4 8.4Z" fill="#d8d8d8"/></svg>
<svg style="left:1008px;top:119px" width="15" height="15"><path d="M0.5 0.5L14 7.5L0.5 14.5Z" fill="#d8d8d8"/></svg>
<div class="a" style="left:1035px;top:75px;width:245px;height:453px;background:#535153"></div>
<div class="a" style="left:1075px;top:75px;width:205px;height:27px;background:#434143"></div>
<div class="a" style="left:1075px;top:75px;width:1px;height:27px;background:#3b393b"></div>
<div class="a" style="left:1116px;top:75px;width:1px;height:26px;background:#3b393b"></div>
<div class="t" style="left:1044px;top:83px;font-size:12px;color:#f0f0f0">颜色</div>
<div class="t" style="left:1085px;top:83px;font-size:12px;color:#a8a6a8">色板</div>
<div class="a" style="left:1262px;top:85px;width:10px;height:8px;background:repeating-linear-gradient(#c6c6c6 0 1px,transparent 1px 2.33px)"></div>
<div class="a" style="left:1055px;top:124px;width:19px;height:19px;background:#fff;border:1px solid #3b393b"></div>
<div class="a" style="left:1043px;top:112px;width:22px;height:22px;border:1px solid #8a888a;background:#535153"></div>
<div class="a" style="left:1045px;top:114px;width:18px;height:18px;background:#000;border:1px solid #f0f0f0"></div>
<div class="a" style="left:1080px;top:110px;width:148px;height:412px;background:linear-gradient(to bottom,rgba(0,0,0,0),#000),linear-gradient(to right,#fff,#00a2ff)"></div>
<div class="a" style="left:1080px;top:110px;width:148px;height:412px;overflow:hidden"><svg style="left:141px;top:405px" width="14" height="14"><circle cx="7" cy="7" r="5" fill="none" stroke="#d8d8d8" stroke-width="1.2"/></svg></div>
<div class="a" style="left:1244px;top:110px;width:20px;height:412px;background:linear-gradient(to bottom,#f00 0%,#f0f 16.67%,#00f 33.33%,#0ff 50%,#0f0 66.67%,#ff0 83.33%,#f00 100%)"></div>
<svg style="left:1234px;top:279px" width="8" height="10"><path d="M0.5 1.5A1 1 0 0 1 1.5 0.5H3.5L7.5 5L3.5 9.5H1.5A1 1 0 0 1 0.5 8.5Z" fill="#e8e8e8"/></svg>
<div class="a" style="left:1035px;top:528px;width:245px;height:3px;background:#3b393b"></div>
<div class="a" style="left:1035px;top:531px;width:245px;height:28px;background:#434143"></div>
<div class="a" style="left:1263px;top:541px;width:10px;height:8px;background:repeating-linear-gradient(#c6c6c6 0 1px,transparent 1px 2.33px)"></div>
<div class="a" style="left:1035px;top:559px;width:245px;height:86px;background:#535153"></div>
<div class="a" style="left:1035px;top:590px;width:245px;height:1px;background:#484648"></div>
<div class="a" style="left:1035px;top:617px;width:245px;height:1px;background:#484648"></div>
<div class="a" style="left:1035px;top:644px;width:245px;height:1px;background:#434143"></div>
<svg style="left:1164px;top:570px" width="14" height="14"><circle cx="7" cy="7" r="5.5" fill="none" stroke="#d8d8d8" stroke-width="1.3"/><path d="M3.2 10.8A5.5 5.5 0 0 1 10.8 3.2Z" fill="#d8d8d8"/></svg>
<svg style="left:1189px;top:570px" width="14" height="14"><path d="M1.5 2H12.5V5.5H11.3V3.8H8.3V11H10V12.5H4V11H5.7V3.8H2.7V5.5H1.5Z" fill="#d8d8d8"/></svg>
<svg style="left:1213px;top:570px" width="14" height="14"><rect x="2.5" y="2.5" width="9" height="9" fill="none" stroke="#d8d8d8" stroke-width="1.2"/><rect x="0.8" y="0.8" width="3" height="3" fill="#535153" stroke="#d8d8d8"/><rect x="10.2" y="0.8" width="3" height="3" fill="#535153" stroke="#d8d8d8"/><rect x="0.8" y="10.2" width="3" height="3" fill="#535153" stroke="#d8d8d8"/><rect x="10.2" y="10.2" width="3" height="3" fill="#535153" stroke="#d8d8d8"/></svg>
<svg style="left:1238px;top:569px" width="13" height="15"><path d="M4.5 5V1H9L12 4V12H7" fill="none" stroke="#d8d8d8" stroke-width="1.3"/><path d="M8.5 1V4.5H12" fill="none" stroke="#d8d8d8" stroke-width="1"/><rect x="1" y="7" width="6" height="7" fill="#d8d8d8"/></svg>
<div class="a" style="left:1266px;top:569px;width:11px;height:17px;border-radius:6px;background:#3f3d3f;border:1px solid #5f5d5f"></div>
<div class="a" style="left:1267px;top:568px;width:9px;height:9px;border-radius:5px;background:#e0e0e0"></div>
<div class="t" style="left:1166px;top:598px;font-size:12px;color:#d8d8d8">不透明度:</div>
<div class="t" style="left:1224px;top:598px;font-size:12px;color:#f0f0f0;letter-spacing:-0.4px">100%</div>
<div class="a" style="left:1220px;top:613px;width:57px;height:1px;background:#777577"></div>
<svg style="left:1265px;top:601px" width="9" height="6"><path d="M1 1L4.5 4.5L8 1" fill="none" stroke="#cfcfcf" stroke-width="1.2"/></svg>
<svg style="left:1167px;top:624px" width="12" height="14"><path d="M3 6V4.2A3 3 0 0 1 9 4.2V6" fill="none" stroke="#e0e0e0" stroke-width="1.5"/><rect x="1" y="6" width="10" height="7.5" rx="1" fill="#e0e0e0"/><rect x="5.2" y="9" width="1.6" height="1.8" fill="#535153"/></svg>
<div class="t" style="left:1188px;top:625px;font-size:12px;color:#d8d8d8">填充:</div>
<div class="t" style="left:1224px;top:625px;font-size:12px;color:#f0f0f0;letter-spacing:-0.4px">100%</div>
<div class="a" style="left:1220px;top:640px;width:57px;height:1px;background:#777577"></div>
<svg style="left:1265px;top:628px" width="9" height="6"><path d="M1 1L4.5 4.5L8 1" fill="none" stroke="#cfcfcf" stroke-width="1.2"/></svg>
<div class="a" style="left:1035px;top:645px;width:245px;height:316px;background:#514f51"></div>
<div class="a" style="left:1035px;top:646px;width:229px;height:32px;background:#6b696b"></div>
<div class="a" style="left:1035px;top:679px;width:229px;height:33px;background:#535153"></div>
<div class="a" style="left:1035px;top:712px;width:229px;height:1px;background:#434143"></div>
<svg style="left:1236px;top:688px" width="11" height="14"><path d="M3 6V4A2.5 2.5 0 0 1 8 4V6" fill="none" stroke="#d8d8d8" stroke-width="1.2"/><rect x="1" y="6" width="9" height="7" fill="none" stroke="#d8d8d8" stroke-width="1.2"/><rect x="4.7" y="8.7" width="1.6" height="1.8" fill="#d8d8d8"/></svg>
<div class="a" style="left:1035px;top:961px;width:245px;height:23px;background:#4a484a"></div>
<div class="a" style="left:1035px;top:960px;width:245px;height:1px;background:#3b393b"></div>
<svg style="left:1076px;top:966px" width="15" height="9"><rect x="0.8" y="1.3" width="7.5" height="6" rx="3" fill="none" stroke="#8a888a" stroke-width="1.3"/><rect x="6.7" y="1.3" width="7.5" height="6" rx="3" fill="none" stroke="#8a888a" stroke-width="1.3"/></svg>
<div class="t" style="left:1104px;top:962px;font-size:15px;font-style:italic;color:#d8d8d8;font-family:'Liberation Sans',sans-serif;letter-spacing:-0.5px">fx</div>
<svg style="left:1117px;top:978px" width="4" height="3"><path d="M0 0H4L2 2.5Z" fill="#d8d8d8"/></svg>
<svg style="left:1130px;top:965px" width="14" height="11"><rect width="14" height="11" fill="#d8d8d8"/><circle cx="7" cy="5.5" r="3" fill="#484648"/></svg>
<svg style="left:1158px;top:964px" width="13" height="13"><circle cx="6.5" cy="6.5" r="5.3" fill="none" stroke="#d8d8d8" stroke-width="1.3"/><path d="M2.8 10.2A5.3 5.3 0 0 1 10.2 2.8Z" fill="#d8d8d8"/></svg>
<svg style="left:1171px;top:978px" width="4" height="3"><path d="M0 0H4L2 2.5Z" fill="#d8d8d8"/></svg>
<svg style="left:1185px;top:964px" width="13" height="12"><path d="M0 1H5L6 2.5H13V12H0Z" fill="#d8d8d8"/></svg>
<svg style="left:1212px;top:965px" width="12" height="12"><path d="M1 1H11V11H5L1 7Z" fill="none" stroke="#d8d8d8" stroke-width="1.3"/><path d="M1 7H5V11" fill="none" stroke="#d8d8d8" stroke-width="1.2"/></svg>
<svg style="left:1239px;top:964px" width="12" height="14"><path d="M0.5 3H11.5M4 3V1H8V3M1.8 3.5L2.5 13H9.5L10.2 3.5M4.5 5.5V11M6 5.5V11M7.5 5.5V11" fill="none" stroke="#d8d8d8" stroke-width="1.2"/></svg>
<div class="a" style="left:0;top:984px;width:1280px;height:40px;background:linear-gradient(#a3b0c3 0,#8797af 2px,#8192ab 50%,#798aa4 100%)"></div>
<div class="a" style="left:0;top:984px;width:1280px;height:1px;background:#5a6678"></div>
<div class="a" style="left:9px;top:986px;width:36px;height:36px;border-radius:50%;background:radial-gradient(circle at 50% 92%,#7fe0ff 0,#2f9ede 28%,#1c5f9e 58%,#173f6e 85%,#122d52 100%);box-shadow:0 0 0 1px rgba(18,36,66,.85),0 0 3px 1px rgba(20,40,70,.5),inset 0 0 2px 1px rgba(170,215,245,.55)"></div>
<div class="a" style="left:12px;top:987px;width:30px;height:15px;border-radius:15px 15px 9px 9px/13px 13px 4px 4px;background:linear-gradient(rgba(255,255,255,.45),rgba(255,255,255,.06))"></div>
<svg style="left:14px;top:991px" width="26" height="25" viewBox="0 0 24 22"><path d="M2.8 3.6C5.8 1.8 8.3 2.2 10.9 3.8L9.3 10.3C6.8 8.8 4.2 8.5 1.2 10.2Z" fill="#f0622a"/><path d="M12.2 4.3C14.8 5.9 17.9 5.9 21.6 3.8L20 10.3C16.9 12.2 13.8 12.2 10.7 10.8Z" fill="#8cc63f"/><path d="M0.9 11.6C3.9 9.6 6.5 10.1 9 11.6L7.4 18.1C4.9 16.6 2.3 16.3 -0.7 18Z" fill="#3fa9e8"/><path d="M10.4 12.1C13 13.6 16 13.6 19.7 11.6L18.1 18.1C15 20 11.9 20 8.8 18.6Z" fill="#f9c834"/></svg>
<svg style="left:69px;top:985px" width="40" height="38" viewBox="0 0 40 38"><defs><linearGradient id="ieg" x1="0" y1="0" x2="0" y2="1"><stop offset="0" stop-color="#1f6fc8"/><stop offset=".55" stop-color="#2e8fe0"/><stop offset="1" stop-color="#8fdcff"/></linearGradient></defs><path d="M5 33.5C1 29 12 14 33 4.5" fill="none" stroke="#e2bd3a" stroke-width="2.4" stroke-linecap="round"/><text x="21" y="30" text-anchor="middle" font-family="Liberation Sans,sans-serif" font-weight="bold" font-size="41" fill="url(#ieg)" stroke="#164f96" stroke-width=".8" textLength="26" lengthAdjust="spacingAndGlyphs">e</text><path d="M33 4.5C36.5 3.5 37 6 33.5 11" fill="none" stroke="#e8c84a" stroke-width="2.2" stroke-linecap="round"/><path d="M5 33.5C7 35.5 12 33.5 16 30.5" fill="none" stroke="#e8c84a" stroke-width="2.2" stroke-linecap="round"/></svg>
<div class="a" style="left:122px;top:986px;width:159px;height:37px;border-radius:3px;border:1px solid #4c5a6e;box-shadow:inset 0 0 0 1px rgba(255,255,255,.45);background:linear-gradient(rgba(255,255,255,.33) 0,rgba(255,255,255,.2) 48%,rgba(225,235,248,.08) 52%,rgba(225,235,248,.2) 100%)"></div>
<div class="t" style="left:167px;top:997px;font-size:12px;color:#fff;text-shadow:0 0 3px rgba(0,0,0,.55);letter-spacing:0.05px">提问_百度知道 - ...</div>
<div class="a" style="left:284px;top:986px;width:160px;height:37px;border-radius:3px;border:1px solid #4c5a6e;box-shadow:inset 0 0 0 1px rgba(255,255,255,.45);background:linear-gradient(90deg,rgba(255,255,255,.55) 0,rgba(255,255,255,.25) 45%,rgba(255,255,255,0) 100%),linear-gradient(rgba(255,255,255,.42) 0,rgba(255,255,255,.3) 48%,rgba(235,242,250,.16) 52%,rgba(235,242,250,.3) 100%)"></div>
<div class="t" style="left:329px;top:997px;font-size:12px;color:#fff;text-shadow:0 0 3px rgba(0,0,0,.55);letter-spacing:-0.14px">F:\VIDEO_TS</div>
<div class="a" style="left:446px;top:986px;width:159px;height:37px;border-radius:3px;border:1px solid #4c5a6e;box-shadow:inset 0 0 0 1px rgba(255,255,255,.45);background:linear-gradient(rgba(255,255,255,.33) 0,rgba(255,255,255,.2) 48%,rgba(225,235,248,.08) 52%,rgba(225,235,248,.2) 100%)"></div>
<div class="t" style="left:490px;top:997px;font-size:12px;color:#fff;text-shadow:0 0 3px rgba(0,0,0,.55);letter-spacing:0.29px">未标题-1 @ 66.7...</div>
<div class="a" style="left:131px;top:988px;width:32px;height:32px;border-radius:6px;background:linear-gradient(#ffa81f,#ff7a1c 55%,#f2541a)"></div>
<svg style="left:131px;top:988px" width="32" height="32" viewBox="0 0 32 32"><path d="M8.5 27C3 22 2.5 9.5 8.5 5.5C12.5 3 16.5 6.5 14.5 10C13.5 12 10.5 11.5 10.8 9.3" fill="none" stroke="#fff" stroke-width="2.6" stroke-linecap="round"/><path d="M12.5 27.5C9 23 10 16 15.5 13.5C17.5 12.6 19.5 12.6 21 12C21.5 9.5 23 8 24.2 8.3L24.6 10.8C26.8 11.6 28.2 13.4 28.6 15.2L26.2 16.4C24.5 16.4 23.5 17 23.2 18.5C25.5 19.5 26.5 21 26.3 22.5L23.2 21.5C22.5 24 23.2 26 24.5 27.5Z" fill="#fff"/><circle cx="16.8" cy="22.5" r="4.3" fill="#ff7a1c" stroke="#fff" stroke-width="1.3"/><circle cx="16.8" cy="22.5" r="1.7" fill="#fff"/><path d="M6 28.3H28" stroke="#fff" stroke-width="1.4"/></svg>
<svg style="left:293px;top:987px" width="28" height="33" viewBox="0 0 36 54" preserveAspectRatio="none"><path d="M2.3 2.5L32.3 8V46.6L10.7 46Z" fill="url(#bf1)" stroke="#d9bf66" stroke-width=".8"/><rect x="30.2" y="30" width="3.6" height="15" fill="#f7f6ee" stroke="#b7bcc6" stroke-width=".6"/><path d="M2.3 2.5L12.6 9L10.7 52.2L2.3 44.7Z" fill="url(#bf2)" stroke="#c9aa4e" stroke-width=".8"/></svg>
<div class="a" style="left:456px;top:988px;width:30px;height:30px;background:#0b1a30;border:2px solid #3d9be2"></div>
<div class="t" style="left:461px;top:993px;font-size:20px;color:#5ab8f4;letter-spacing:-0.6px;transform:scaleX(.92);transform-origin:0 0">Ps</div>
<div class="t" style="left:1072px;top:996px;font-size:12px;color:#fff;font-family:'Liberation Mono',monospace;letter-spacing:-1px">CH</div>
<svg style="left:1094px;top:996px" width="16" height="13"><path d="M5 3C6 1 8 2.5 10.5 0.8" fill="none" stroke="#c9c9c9" stroke-width="1"/><rect x="0.5" y="3.5" width="14" height="8" rx="1.5" fill="#e9e4dc" stroke="#8d8d8d" stroke-width="1"/><path d="M2.5 6H12.5M2.5 7.8H12.5M4 9.6H11" stroke="#8d8d8d" stroke-width=".9" stroke-dasharray="1.2 .8"/></svg>
<svg style="left:1121px;top:1002px" width="9" height="6"><path d="M0.5 5.5L4.5 0.8L8.5 5.5Z" fill="#fff" stroke="#dfe6ee" stroke-width=".6"/></svg>
<svg style="left:1141px;top:994px" width="17" height="18"><path d="M1 6H4L9 1.5V16.5L4 12H1Z" fill="#f4f4f4" stroke="#7c8794" stroke-width=".8"/><path d="M11 6A4 4 0 0 1 11 12M12.8 3.8A7 7 0 0 1 12.8 14.2" fill="none" stroke="#f4f4f4" stroke-width="1.3"/></svg>
<svg style="left:1162px;top:996px" width="21" height="18"><rect x="8.6" y="4.6" width="11" height="8.2" fill="#56657a" stroke="#f4f4f4" stroke-width="1.3"/><path d="M10 16.5H18.5M14.2 13V16.5" stroke="#f4f4f4" stroke-width="1.4"/><path d="M2.6 1V3.5M5.4 1V3.5" stroke="#f4f4f4" stroke-width="1.1"/><rect x="1.6" y="3.5" width="4.8" height="4" fill="#f4f4f4"/><path d="M4 7.5V13.5H8" fill="none" stroke="#f4f4f4" stroke-width="1.2"/></svg>
<div class="t" style="left:1188px;top:990px;width:80px;text-align:center;font-size:12px;color:#fff">16:45</div>
<div class="t" style="left:1188px;top:1007px;width:80px;text-align:center;font-size:12px;color:#fff">2016/9/10</div>
<div class="a" style="left:1266px;top:985px;width:14px;height:39px;border-left:1px solid #53627a;background:linear-gradient(90deg,#8b9db5,#74889f 40%,#6a7d94)"></div>
<div class="a" style="left:96px;top:152px;width:1070px;height:809px;border-radius:8px 8px 2px 2px;background:#1d1f24"></div>
<div class="a" style="left:97px;top:153px;width:1068px;height:807px;border-radius:7px 7px 1px 1px;background:linear-gradient(#f4f9fd 0,#f4f9fd 1px,#9ab5d1 2px,#a3bdd8 20px,#b4cce3 40px,#c2d8ec 62px,#c2d8ec 100%);box-shadow:inset 1px 1px 0 0 #eef5fb,inset -1px -1px 0 0 #62c3ea"></div>
<div class="a" style="left:98px;top:154px;width:1066px;height:62px;border-radius:6px 6px 0 0;background:linear-gradient(#edf4fa 0,#9bb5d4 1.5px,#a3bbda 12px,#b3cae6 24px,#b9d2eb 32px,#bbd3eb 62px)"></div>
<div class="a" style="left:98px;top:216px;width:1066px;height:743px;background:#bdd5ec"></div>
<div class="a" style="left:1162px;top:216px;width:3px;height:744px;background:#8fd1f2"></div>
<div class="a" style="left:98px;top:957px;width:1067px;height:3px;background:#7fcbf0"></div>
<div class="a" style="left:1046px;top:158px;width:36px;height:21px;border:1px solid #5b708c;border-radius:2.5px;background:linear-gradient(#c6d8ec 0,#b5cbe4 45%,#9db7d6 50%,#b3c9e2 100%);box-shadow:inset 0 0 0 1px rgba(255,255,255,.55)"></div>
<div class="a" style="left:1084px;top:158px;width:36px;height:21px;border:1px solid #5b708c;border-radius:2.5px;background:linear-gradient(#c6d8ec 0,#b5cbe4 45%,#9db7d6 50%,#b3c9e2 100%);box-shadow:inset 0 0 0 1px rgba(255,255,255,.55)"></div>
<div class="a" style="left:1122px;top:158px;width:38px;height:21px;border:1px solid #5d1e14;border-radius:2.5px;background:linear-gradient(#e8a494 0,#d9725f 45%,#c33f28 50%,#cf5a3c 100%);box-shadow:inset 0 0 0 1px rgba(255,255,255,.55)"></div>
<div class="a" style="left:1057px;top:169px;width:13px;height:5px;background:#fff;border:1px solid #51607a;border-radius:1px"></div>
<div class="a" style="left:1096px;top:163px;width:13px;height:11px;background:#fff;border:1px solid #51607a;border-radius:1px"></div>
<div class="a" style="left:1100px;top:166px;width:5px;height:4px;background:#a9bfd9;border:1px solid #51607a"></div>
<svg style="left:1134px;top:163px" width="15" height="12"><path d="M1.8 1H5.2L7.5 3.8L9.8 1H13.2L9.3 6L13.2 11H9.8L7.5 8.2L5.2 11H1.8L5.7 6Z" fill="#fff" stroke="#5a2a22" stroke-width="1" stroke-linejoin="round"/></svg>
<div class="a" style="left:103px;top:186px;width:54px;height:25px;border-radius:13px;background:linear-gradient(rgba(255,255,255,.15),rgba(120,150,185,.35));box-shadow:inset 0 1px 1px rgba(70,95,130,.6)"></div>
<div class="a" style="left:103px;top:186px;width:25px;height:25px;border-radius:50%;background:radial-gradient(circle at 50% 105%,#7fe0ff 0,#2a93f0 30%,#0f45a8 58%,#16367f 100%);border:1px solid #1a3566;box-shadow:inset 0 0 0 1px rgba(255,255,255,.5)"></div>
<div class="a" style="left:106px;top:188px;width:19px;height:10px;border-radius:10px 10px 6px 6px/8px 8px 3px 3px;background:linear-gradient(rgba(255,255,255,.75),rgba(255,255,255,.15))"></div>
<svg style="left:107px;top:191px" width="17" height="15"><path d="M7.5 0.8L1 7.5L7.5 14.2V10H16V5H7.5Z" fill="#fff" stroke="#24448e" stroke-width=".7" stroke-linejoin="round"/></svg>
<div class="a" style="left:131px;top:186px;width:25px;height:25px;border-radius:50%;background:linear-gradient(#e6eef6 0,#cfdbe8 45%,#b3c4d6 55%,#cad8e6 100%);border:1px solid #6f8096;box-shadow:inset 0 0 0 1px rgba(255,255,255,.6)"></div>
<svg style="left:136px;top:192px" width="16" height="13"><path d="M9 0.8L15 6.5L9 12.2V8.6H1V4.4H9Z" fill="#dfe7ef" stroke="#b4c2d1" stroke-width=".8"/></svg>
<svg style="left:159px;top:196px" width="9" height="6"><path d="M0.5 0.5H8.5L4.5 5.5Z" fill="#3d7fcf" stroke="#2c5c9c" stroke-width=".6"/></svg>
<div class="a" style="left:171px;top:186px;width:741px;height:23px;background:linear-gradient(#edf2fa,#e8eff9);border:1px solid #7f93ab;border-top-color:#47525f;border-bottom-color:#a7b4c6;border-radius:2px;box-shadow:inset 0 -1px 0 0 rgba(255,255,255,.8)"></div>
<div class="a" style="left:887px;top:187px;width:1px;height:20px;background:#9fb1c6"></div>
<svg style="left:175px;top:189px" width="14" height="16" viewBox="0 0 14 16"><path d="M7 1.5H12L13.3 2.8V14.6H7Z" fill="#e3c358" stroke="#bd9a36" stroke-width=".6"/><path d="M9.5 3V14.6H13.3V2.8Z" fill="#d9b548" opacity=".7"/><path d="M.8 1.8C3 .6 5 .4 7.2 1V15.4C5 15 3 15 .8 15.2Z" fill="#f6e596" stroke="#cdae4a" stroke-width=".6"/><path d="M7.2 1V15.4" stroke="#a98625" stroke-width=".9"/><rect x="12.3" y="7" width="1.2" height="3" fill="#f7f2d8"/></svg>
<svg style="left:198px;top:193px" width="6" height="9"><path d="M0.5 0.3L5.2 4.5L0.5 8.7Z" fill="#111"/></svg>
<svg style="left:259px;top:193px" width="6" height="9"><path d="M0.5 0.3L5.2 4.5L0.5 8.7Z" fill="#111"/></svg>
<svg style="left:419px;top:193px" width="6" height="9"><path d="M0.5 0.3L5.2 4.5L0.5 8.7Z" fill="#111"/></svg>
<div class="t" style="left:213px;top:191px;font-size:12px;color:#111">计算机</div>
<div class="t" style="left:274px;top:191px;font-size:12px;color:#111;letter-spacing:0.11px">BD-RE 驱动器 (F:) DVD3</div>
<div class="t" style="left:434px;top:191px;font-size:12px;color:#111;letter-spacing:-0.27px">VIDEO_TS</div>
<svg style="left:873px;top:195px" width="8" height="5"><path d="M0.5 0.5H7.5L4 4.5Z" fill="#111"/></svg>
<svg style="left:892px;top:190px" width="16" height="14"><path d="M1 7C1 4 3 2.5 6 2.5V0.5L9.5 3.5L6 6.5V4.5C4 4.5 3 5.5 3 7Z" fill="#3a78c2" stroke="#2a5a98" stroke-width=".4"/><path d="M15 7C15 10 13 11.5 10 11.5V13.5L6.5 10.5L10 7.5V9.5C12 9.5 13 8.5 13 7Z" fill="#3a78c2" stroke="#2a5a98" stroke-width=".4"/></svg>
<div class="a" style="left:919px;top:186px;width:242px;height:23px;background:linear-gradient(#edf2fa,#e8eff9);border:1px solid #7f93ab;border-top-color:#47525f;border-bottom-color:#a7b4c6;border-radius:2px;box-shadow:inset 0 -1px 0 0 rgba(255,255,255,.8)"></div>
<div class="t" style="left:929px;top:191px;font-size:12px;font-style:italic;color:#7b7b7b;letter-spacing:0.03px">搜索 VIDEO_TS</div>
<svg style="left:1141px;top:190px" width="14" height="14"><circle cx="8.5" cy="5" r="3.6" fill="#eaf3fb" stroke="#3270b8" stroke-width="1.6"/><path d="M6 8L1.5 12.5" stroke="#3270b8" stroke-width="2" stroke-linecap="round"/></svg>
<div class="a" style="left:100px;top:216px;width:1062px;height:1px;background:#a9b9cd"></div>
<div class="a" style="left:100px;top:217px;width:1062px;height:23px;background:linear-gradient(#fefeff 0,#f7f8fc 7px,#d7dbed 8.5px,#e4e7f4 22px);border-bottom:1px solid #a9afc3"></div>
<div class="t" style="left:110px;top:224px;font-size:12px;color:#111;letter-spacing:-0.34px">文件(<u>F</u>)</div>
<div class="t" style="left:164px;top:224px;font-size:12px;color:#111;letter-spacing:-0.25px">编辑(<u>E</u>)</div>
<div class="t" style="left:219px;top:224px;font-size:12px;color:#111;letter-spacing:0.10px">查看(<u>V</u>)</div>
<div class="t" style="left:275px;top:224px;font-size:12px;color:#111;letter-spacing:-0.06px">工具(<u>T</u>)</div>
<div class="t" style="left:330px;top:224px;font-size:12px;color:#111;letter-spacing:0.21px">帮助(<u>H</u>)</div>
<div class="a" style="left:100px;top:240px;width:1062px;height:31px;background:linear-gradient(#fafcfe 0,#eef4fb 45%,#dfe9f6 50%,#dde8f5 100%);border-bottom:1px solid #a9b9cf"></div>
<div class="t" style="left:118px;top:250px;font-size:12px;color:#1e395b">组织</div>
<svg style="left:147px;top:253px" width="8" height="5"><path d="M0.5 0.5H7.5L4 4.5Z" fill="#1e395b"/></svg>
<div class="t" style="left:185px;top:250px;font-size:12px;color:#1e395b;letter-spacing:0.50px">刻录到光盘</div>
<svg style="left:1041px;top:249px" width="14" height="13"><g fill="none" stroke="#5a6b85" stroke-width=".9"><rect x=".5" y=".5" width="3" height="3"/><rect x=".5" y="4.8" width="3" height="3"/><rect x=".5" y="9.1" width="3" height="3"/></g><path d="M5.5 2H13M5.5 6.3H13M5.5 10.6H13" stroke="#44546e" stroke-width="1" stroke-dasharray="3 1"/></svg>
<svg style="left:1065px;top:253px" width="8" height="5"><path d="M0.5 0.5H7.5L4 4.5Z" fill="#1e2f4d"/></svg>
<svg style="left:1095px;top:248px" width="16" height="14"><rect x=".5" y=".5" width="15" height="13" fill="#fff" stroke="#4a6486"/><rect x="10" y="2" width="5" height="11" fill="#7fb6d6"/><rect x="1" y="1" width="14" height="2" fill="#c9d8ea"/></svg>
<div class="a" style="left:1130px;top:247px;width:17px;height:17px;border-radius:50%;background:radial-gradient(circle at 50% 25%,#8fb4ee 0,#2a56b8 55%,#17358a 100%);border:1px solid #1b3474;box-shadow:0 0 0 1px rgba(255,255,255,.7)"></div>
<div class="t" style="left:1135px;top:249px;font-size:13px;font-weight:bold;color:#fff">?</div>
<div class="a" style="left:100px;top:272px;width:1062px;height:626px;background:#fcfbfd"></div>
<div class="a" style="left:265px;top:272px;width:17px;height:626px;background:#f0eff1"></div>
<svg style="left:270px;top:278px" width="7" height="5"><path d="M3.5 0.5L6.8 4.5H0.2Z" fill="#474747"/></svg>
<svg style="left:270px;top:887px" width="7" height="5"><path d="M3.5 4.5L6.8 0.5H0.2Z" fill="#474747"/></svg>
<div class="a" style="left:266px;top:290px;width:15px;height:567px;border:1px solid #979797;border-radius:2px;background:linear-gradient(90deg,#eeedef 0,#dad8db 40%,#c9c7ca 50%,#dddbde 100%)"></div>
<div class="a" style="left:270px;top:570px;width:7px;height:7px;background:repeating-linear-gradient(#6e6e6e 0 1px,#fdfdfd 1px 2px,transparent 2px 3px)"></div>
<div class="a" style="left:282px;top:272px;width:1px;height:626px;background:#e6ebf2"></div>
<div class="a" style="left:1145px;top:272px;width:17px;height:626px;background:#f0eff1"></div>
<svg style="left:1150px;top:278px" width="7" height="5"><path d="M3.5 0.5L6.8 4.5H0.2Z" fill="#474747"/></svg>
<svg style="left:1150px;top:887px" width="7" height="5"><path d="M3.5 4.5L6.8 0.5H0.2Z" fill="#474747"/></svg>
<div class="a" style="left:1146px;top:290px;width:15px;height:22px;border:1px solid #979797;border-radius:2px;background:linear-gradient(90deg,#eeedef 0,#dad8db 40%,#c9c7ca 50%,#dddbde 100%)"></div>
<div class="a" style="left:1150px;top:297px;width:7px;height:7px;background:repeating-linear-gradient(#6e6e6e 0 1px,#fdfdfd 1px 2px,transparent 2px 3px)"></div>
<div class="a" style="left:102px;top:695px;width:163px;height:23px;border:1px solid #d9d9d9;border-radius:2px;background:linear-gradient(#f8f8f8,#e5e5e5)"></div>
<div class="a" id="nav" style="left:100px;top:272px;width:165px;height:626px;overflow:hidden"><div class="a" style="left:-100px;top:-272px">
<svg style="left:120px;top:284px" width="16" height="15" viewBox="0 0 17 16"><defs><radialGradient id="stg" cx=".5" cy=".5" r=".5"><stop offset="0" stop-color="#fff0a8"/><stop offset=".55" stop-color="#ffd45e"/><stop offset="1" stop-color="#f8a531"/></radialGradient></defs><path d="M8.5 0.8L10.8 5.8L16.2 6.3L12.1 9.9L13.3 15.2L8.5 12.4L3.7 15.2L4.9 9.9L0.8 6.3L6.2 5.8Z" fill="url(#stg)" stroke="#f08c1a" stroke-width="1.5" stroke-linejoin="round"/></svg>
<div class="t nv" style="left:141px;top:287px">收藏夹</div>
<svg style="left:131px;top:307px" width="14" height="16" viewBox="0 0 14 16"><path d="M7 1.5H12L13.3 2.8V14.6H7Z" fill="#e3c358" stroke="#bd9a36" stroke-width=".6"/><path d="M9.5 3V14.6H13.3V2.8Z" fill="#d9b548" opacity=".7"/><path d="M.8 1.8C3 .6 5 .4 7.2 1V15.4C5 15 3 15 .8 15.2Z" fill="#f6e596" stroke="#cdae4a" stroke-width=".6"/><path d="M7.2 1V15.4" stroke="#a98625" stroke-width=".9"/><rect x="12.3" y="7" width="1.2" height="3" fill="#f7f2d8"/></svg>
<div class="t nv" style="left:151px;top:310px">2345下载</div>
<svg style="left:131px;top:330px" width="14" height="16" viewBox="0 0 14 16"><path d="M7 1.5H12L13.3 2.8V14.6H7Z" fill="#e3c358" stroke="#bd9a36" stroke-width=".6"/><path d="M9.5 3V14.6H13.3V2.8Z" fill="#d9b548" opacity=".7"/><path d="M.8 1.8C3 .6 5 .4 7.2 1V15.4C5 15 3 15 .8 15.2Z" fill="#f6e596" stroke="#cdae4a" stroke-width=".6"/><path d="M7.2 1V15.4" stroke="#a98625" stroke-width=".9"/><rect x="12.3" y="7" width="1.2" height="3" fill="#f7f2d8"/></svg>
<svg style="left:137px;top:337px" width="9" height="9"><path d="M2.5 0.5H6.5V4H8.5L4.5 8.5L0.5 4H2.5Z" fill="#2f8fe6" stroke="#1b62b0" stroke-width=".6"/></svg>
<div class="t nv" style="left:151px;top:333px">下载</div>
<svg style="left:130px;top:354px" width="17" height="14" viewBox="0 0 17 14"><defs><linearGradient id="dkg" x1="0" y1="0" x2="1" y2="1"><stop offset="0" stop-color="#1c3a86"/><stop offset="1" stop-color="#3f7fd6"/></linearGradient></defs><rect x=".5" y="1.5" width="15.5" height="11.5" fill="url(#dkg)" stroke="#5d6f8c"/><rect x="1.2" y="9.6" width="14" height="2.6" fill="#7fa9dc"/><rect x="1.6" y="10.2" width="2" height="1.5" fill="#cfe3f7"/></svg>
<div class="t nv" style="left:151px;top:356px">桌面</div>
<svg style="left:130px;top:376px" width="17" height="16" viewBox="0 0 17 16"><rect x="4.5" y="2.5" width="10" height="9" fill="#eef3f8" stroke="#8a97a8"/><rect x="6" y="4" width="5" height="5" fill="#8db9e6"/><circle cx="4" cy="4" r="3.2" fill="#f4f6f8" stroke="#8791a0" stroke-width=".8"/><path d="M4 2.2V4H5.5" stroke="#555" stroke-width=".7" fill="none"/><rect x="3" y="12" width="13" height="3" fill="#c5ccd6" stroke="#8a97a8" stroke-width=".6"/></svg>
<div class="t nv" style="left:151px;top:379px">最近访问的位置</div>
<svg style="left:119px;top:423px" width="17" height="15" viewBox="0 0 17 15"><path d="M1 3H6L7 1.5H13V4H16V13H1Z" fill="#f2dc8a" stroke="#c7a84a" stroke-width=".7"/><rect x="3" y="6" width="11" height="7" fill="#9fd0f0" stroke="#4d8fc0" stroke-width=".7"/><rect x="5" y="9.5" width="7" height="3.5" fill="#e8f3fb"/></svg>
<div class="t nv" style="left:141px;top:425px">库</div>
<svg style="left:131px;top:446px" width="15" height="15" viewBox="0 0 15 15"><rect x=".5" y=".5" width="14" height="14" fill="#3a4654" stroke="#222c38"/><rect x="3.5" y="2" width="8" height="5" fill="#d88a4a"/><rect x="3.5" y="8" width="8" height="5" fill="#5aa0d8"/><path d="M1.8 1.5V13.5M13.2 1.5V13.5" stroke="#e8edf2" stroke-width="1.1" stroke-dasharray="1.3 1.3"/></svg>
<div class="t nv" style="left:151px;top:448px">视频</div>
<svg style="left:131px;top:470px" width="16" height="13" viewBox="0 0 16 13"><rect x=".5" y=".5" width="15" height="12" fill="#f4f8fb" stroke="#7d8a9a"/><rect x="2" y="2" width="12" height="9" fill="#8fc4ea"/><path d="M2 11L6 6.5L9 9L11 7.5L14 11Z" fill="#5d9c54"/></svg>
<div class="t nv" style="left:151px;top:471px">图片</div>
<svg style="left:132px;top:491px" width="14" height="16" viewBox="0 0 14 16"><path d="M1.5.5H9.5L12.5 3.5V15.5H1.5Z" fill="#fbfcfe" stroke="#8a97a8"/><path d="M3.5 4H8M3.5 6H10.5M3.5 8H10.5M3.5 10H10.5M3.5 12H10.5" stroke="#9aa7ba" stroke-width=".8"/><rect x="7" y="6.5" width="3.5" height="3.5" fill="#5b93d4"/></svg>
<div class="t nv" style="left:151px;top:494px">文档</div>
<svg style="left:131px;top:514px" width="16" height="16" viewBox="0 0 16 16"><path d="M4.5.5H11.5L14.5 3.5V12.5H4.5Z" fill="#fbfcfe" stroke="#8a97a8"/><rect x=".8" y="6" width="10" height="9" fill="#e6f0fa" stroke="#4d86c4"/><rect x="2.3" y="8" width="7" height="5" fill="#9cc4ee"/></svg>
<div class="t nv" style="left:151px;top:517px">迅雷下载</div>
<svg style="left:132px;top:536px" width="14" height="17" viewBox="0 0 14 17"><ellipse cx="4.5" cy="13" rx="3.6" ry="3" fill="#2d86d6" stroke="#1b5ea8" stroke-width=".6"/><path d="M7.3 13V1C8.5 4 12.5 4.5 12 9C11.5 6.5 9.5 6 8.3 5.5V13Z" fill="#2d86d6" stroke="#1b5ea8" stroke-width=".5"/></svg>
<div class="t nv" style="left:151px;top:540px">音乐</div>
<svg style="left:130px;top:561px" width="17" height="14" viewBox="0 0 17 14"><path d="M.5 2.5H5L6.5 1H16.5V13.5H.5Z" fill="#2e8be0" stroke="#1c62ad" stroke-width=".7"/><rect x=".5" y="3" width="3" height="10.5" fill="#e14a3a"/><path d="M7 4.5L12.5 7.8L7 11Z" fill="#fff"/></svg>
<div class="t nv" style="left:151px;top:563px">优酷影视库</div>
<svg style="left:119px;top:607px" width="17" height="15" viewBox="0 0 17 15"><rect x="3.6" y=".6" width="12.8" height="9.3" fill="#2a5fd8" stroke="#b9bfc9" stroke-width="1.2"/><path d="M4.6 1.6H11L4.6 7Z" fill="#7fa4f4" opacity=".75"/><path d="M7 13.5H13M10 10V13.5" stroke="#7e8896" stroke-width="1.6"/><rect x=".5" y="4" width="2" height="9" fill="#dfe3e8" stroke="#8d97a6" stroke-width=".6"/></svg>
<div class="t nv" style="left:141px;top:609px">计算机</div>
<svg style="left:130px;top:629px" width="17" height="16" viewBox="0 0 17 16"><rect x=".5" y="9.5" width="16" height="6" rx="1" fill="#d5d9de" stroke="#7f8792"/><rect x="11" y="11.5" width="4" height="2" fill="#58a84e"/><path d="M4 1.5C6 .5 7.5 1 8.5 2L7.8 5.5C6.5 4.5 5 4.5 3.2 5.3Z" fill="#e8542a"/><path d="M9.3 2.3C10.5 3 12 3 13.5 2L12.8 5.5C11.5 6.5 10 6.5 8.6 5.8Z" fill="#7fc241"/><path d="M3 6C5 5 6.5 5.5 7.6 6.3L7 9C5.5 8.3 4 8.3 2.5 9Z" fill="#2d9de0"/><path d="M8.4 6.6C9.8 7.3 11.2 7.3 12.6 6.3L12 9C10.6 9.7 9.2 9.7 7.8 9.2Z" fill="#f8c52c"/></svg>
<div class="t nv" style="left:151px;top:632px">本地磁盘 (C:)</div>
<svg style="left:130px;top:656px" width="17" height="12" viewBox="0 0 17 12"><rect x=".5" y="2.5" width="16" height="9" rx="1" fill="#dcdfe3" stroke="#7f8792"/><rect x="2" y="4" width="9" height="5.5" fill="#f2f6f2" stroke="#8aa08a" stroke-width=".4"/><text x="2.6" y="9" font-size="5.5" font-family="Liberation Sans,sans-serif" fill="#2f8f3a" font-weight="bold">??</text><rect x="12.3" y="5" width="3" height="4.5" fill="#7dbb6a" stroke="#5a8a4e" stroke-width=".4"/></svg>
<div class="t nv" style="left:151px;top:655px">2 (D:)</div>
<svg style="left:130px;top:679px" width="17" height="12" viewBox="0 0 17 12"><rect x=".5" y="2.5" width="16" height="9" rx="1" fill="#dcdfe3" stroke="#7f8792"/><rect x="2" y="4" width="9" height="5.5" fill="#f2f6f2" stroke="#8aa08a" stroke-width=".4"/><text x="2.6" y="9" font-size="5.5" font-family="Liberation Sans,sans-serif" fill="#2f8f3a" font-weight="bold">??</text><rect x="12.3" y="5" width="3" height="4.5" fill="#7dbb6a" stroke="#5a8a4e" stroke-width=".4"/></svg>
<div class="t nv" style="left:151px;top:678px">本地磁盘 (E:)</div>
<svg style="left:130px;top:698px" width="16" height="16" viewBox="0 0 16 16"><circle cx="8" cy="8" r="7.3" fill="#d4d7db" stroke="#8a8f96" stroke-width=".8"/><path d="M8 8L14 3.5A7.3 7.3 0 0 1 15.2 8.8Z" fill="#f1f2f4"/><path d="M8 8L2 12.5A7.3 7.3 0 0 1 .8 7.2Z" fill="#bfc3c8"/><circle cx="8" cy="8" r="2.2" fill="#f6f6f6" stroke="#8a8f96" stroke-width=".7"/></svg>
<div class="t nv" style="left:151px;top:701px">BD-RE 驱动器 (F:) D'</div>
<svg style="left:121px;top:746px" width="17" height="15" viewBox="0 0 17 15"><rect x="3.6" y=".6" width="12.8" height="9.3" fill="#1f3fc0" stroke="#b9bfc9" stroke-width="1.2"/><path d="M4.6 1.6H11L4.6 7Z" fill="#7fa4f4" opacity=".75"/><path d="M7 13.5H13M10 10V13.5" stroke="#7e8896" stroke-width="1.6"/><rect x=".5" y="4" width="2" height="9" fill="#dfe3e8" stroke="#8d97a6" stroke-width=".6"/></svg>
<svg style="left:118px;top:742px" width="11" height="11"><circle cx="5.5" cy="5.5" r="5" fill="#3b9ae0" stroke="#2a6fae" stroke-width=".6"/><path d="M2 4C3.5 2 5 3 5.5 4.5C6 6 4.5 7 3.5 8C2.5 7 1.5 5.5 2 4ZM7 2.5C8.5 3 9.5 5 8.5 7C7.5 6.5 7 4.5 7 2.5Z" fill="#6cc04a"/></svg>
<div class="t nv" style="left:141px;top:747px">网络</div>
<svg style="left:129px;top:768px" width="17" height="15" viewBox="0 0 17 15"><rect x="3.6" y=".6" width="12.8" height="9.3" fill="#1c2fb4" stroke="#b9bfc9" stroke-width="1.2"/><path d="M4.6 1.6H11L4.6 7Z" fill="#7fa4f4" opacity=".75"/><path d="M7 13.5H13M10 10V13.5" stroke="#7e8896" stroke-width="1.6"/><rect x=".5" y="4" width="2" height="9" fill="#dfe3e8" stroke="#8d97a6" stroke-width=".6"/></svg>
<div class="t nv" style="left:151px;top:770px">KX02</div>
<svg style="left:129px;top:791px" width="17" height="15" viewBox="0 0 17 15"><rect x="3.6" y=".6" width="12.8" height="9.3" fill="#1c2fb4" stroke="#b9bfc9" stroke-width="1.2"/><path d="M4.6 1.6H11L4.6 7Z" fill="#7fa4f4" opacity=".75"/><path d="M7 13.5H13M10 10V13.5" stroke="#7e8896" stroke-width="1.6"/><rect x=".5" y="4" width="2" height="9" fill="#dfe3e8" stroke="#8d97a6" stroke-width=".6"/></svg>
<div class="t nv" style="left:151px;top:793px">KX03</div>
<svg style="left:129px;top:814px" width="17" height="15" viewBox="0 0 17 15"><rect x="3.6" y=".6" width="12.8" height="9.3" fill="#1c2fb4" stroke="#b9bfc9" stroke-width="1.2"/><path d="M4.6 1.6H11L4.6 7Z" fill="#7fa4f4" opacity=".75"/><path d="M7 13.5H13M10 10V13.5" stroke="#7e8896" stroke-width="1.6"/><rect x=".5" y="4" width="2" height="9" fill="#dfe3e8" stroke="#8d97a6" stroke-width=".6"/></svg>
<div class="t nv" style="left:151px;top:816px">KX04</div>
<svg style="left:129px;top:837px" width="17" height="15" viewBox="0 0 17 15"><rect x="3.6" y=".6" width="12.8" height="9.3" fill="#1c2fb4" stroke="#b9bfc9" stroke-width="1.2"/><path d="M4.6 1.6H11L4.6 7Z" fill="#7fa4f4" opacity=".75"/><path d="M7 13.5H13M10 10V13.5" stroke="#7e8896" stroke-width="1.6"/><rect x=".5" y="4" width="2" height="9" fill="#dfe3e8" stroke="#8d97a6" stroke-width=".6"/></svg>
<div class="t nv" style="left:151px;top:839px">KX05</div>
<svg style="left:129px;top:860px" width="17" height="15" viewBox="0 0 17 15"><rect x="3.6" y=".6" width="12.8" height="9.3" fill="#1c2fb4" stroke="#b9bfc9" stroke-width="1.2"/><path d="M4.6 1.6H11L4.6 7Z" fill="#7fa4f4" opacity=".75"/><path d="M7 13.5H13M10 10V13.5" stroke="#7e8896" stroke-width="1.6"/><rect x=".5" y="4" width="2" height="9" fill="#dfe3e8" stroke="#8d97a6" stroke-width=".6"/></svg>
<div class="t nv" style="left:151px;top:862px">KX06</div>
<svg style="left:129px;top:883px" width="17" height="15" viewBox="0 0 17 15"><rect x="3.6" y=".6" width="12.8" height="9.3" fill="#1c2fb4" stroke="#b9bfc9" stroke-width="1.2"/><path d="M4.6 1.6H11L4.6 7Z" fill="#7fa4f4" opacity=".75"/><path d="M7 13.5H13M10 10V13.5" stroke="#7e8896" stroke-width="1.6"/><rect x=".5" y="4" width="2" height="9" fill="#dfe3e8" stroke="#8d97a6" stroke-width=".6"/></svg>
<div class="t nv" style="left:151px;top:885px">USER-8098G04MLP</div>
</div></div>
<div class="a" style="left:555px;top:272px;width:1px;height:25px;background:linear-gradient(#fcfbfd,#dfe5ee 60%,#e6ebf2)"></div>
<div class="a" style="left:675px;top:272px;width:1px;height:25px;background:linear-gradient(#fcfbfd,#dfe5ee 60%,#e6ebf2)"></div>
<div class="a" style="left:795px;top:272px;width:1px;height:25px;background:linear-gradient(#fcfbfd,#dfe5ee 60%,#e6ebf2)"></div>
<div class="a" style="left:875px;top:272px;width:1px;height:25px;background:linear-gradient(#fcfbfd,#dfe5ee 60%,#e6ebf2)"></div>
<div class="t" style="left:301px;top:280px;font-size:12px;color:#4c607a">名称</div>
<div class="t" style="left:562px;top:280px;font-size:12px;color:#4c607a">修改日期</div>
<div class="t" style="left:682px;top:280px;font-size:12px;color:#4c607a">类型</div>
<div class="t" style="left:802px;top:280px;font-size:12px;color:#4c607a">大小</div>
<svg style="left:421px;top:273px" width="8" height="4"><path d="M0 4L4 0L8 4Z" fill="#7fa9c9"/><path d="M1.8 4L4 1.8L6.2 4Z" fill="#c5e0f2"/></svg>
<svg style="left:291px;top:313px" width="7" height="7"><path d="M6.5 0.5V6.5H0.5Z" fill="#3c3c3c"/></svg>
<div class="t" style="left:305px;top:310px;font-size:15px;color:#1e3287">光盘中当前包含的文件 (696)</div>
<div class="a" style="left:504px;top:318px;width:634px;height:1px;background:#e2e6ee"></div>
<div class="a" style="left:298px;top:522px;width:574px;height:21px;border:1px solid #b8d6fb;border-radius:3px;background:linear-gradient(#fafbfd,#f2f7fe)"></div>
<style>.fn{left:322.5px;color:#1a1a1a;letter-spacing:-0.3px}.fd{left:562px;color:#6d6d6d;letter-spacing:0.55px}.ft{left:682px;color:#6d6d6d;letter-spacing:0.3px}.fs{left:768px;width:100px;text-align:right;color:#6d6d6d}.r{position:absolute;left:0;width:1280px;height:21px;font-size:12px;line-height:21px}.r div{position:absolute;top:0;white-space:nowrap}</style>
<div class="a" style="left:283px;top:298px;width:862px;height:600px;overflow:hidden"><div class="a" style="left:-283px;top:-298px">
<svg style="left:304px;top:335px" width="13" height="16" viewBox="0 0 13 16"><path d="M.5.5H8.5L12.5 4.5V15.5H.5Z" fill="#f9f9f9" stroke="#a3a3a3"/><path d="M8.5 .5V4.5H12.5" fill="#e9e9e9" stroke="#a3a3a3" stroke-width=".8"/></svg>
<div class="r" style="top:334px"><div class="fn">VIDEO_TS.BUP</div><div class="fd">2008/5/6 19:32</div><div class="ft">BUP 文件</div><div class="fs" style="letter-spacing:0.50px">112 KB</div></div>
<svg style="left:304px;top:356px" width="13" height="16" viewBox="0 0 13 16"><path d="M.5.5H8.5L12.5 4.5V15.5H.5Z" fill="#f9f9f9" stroke="#a3a3a3"/><path d="M8.5 .5V4.5H12.5" fill="#e9e9e9" stroke="#a3a3a3" stroke-width=".8"/></svg>
<svg style="left:302px;top:362px" width="16" height="8" viewBox="0 0 16 8"><defs><linearGradient id="gb1" x1="0" y1="0" x2="0" y2="1"><stop offset="0" stop-color="#c0922e"/><stop offset="1" stop-color="#8f6610"/></linearGradient></defs><rect x=".4" y=".4" width="15.2" height="7.2" rx="1.6" fill="url(#gb1)" stroke="#7f5a10" stroke-width=".8"/><text x="8" y="6.8" text-anchor="middle" font-family="Liberation Sans,sans-serif" font-weight="bold" font-size="7.8" fill="#fffbe8" textLength="12.6" lengthAdjust="spacingAndGlyphs">IFO</text></svg>
<div class="r" style="top:355px"><div class="fn">VIDEO_TS.IFO</div><div class="fd">2008/5/6 19:32</div><div class="ft">媒体文件 (.ifo)</div><div class="fs" style="letter-spacing:0.50px">112 KB</div></div>
<svg style="left:304px;top:377px" width="13" height="16" viewBox="0 0 13 16"><path d="M.5.5H8.5L12.5 4.5V15.5H.5Z" fill="#f9f9f9" stroke="#a3a3a3"/><path d="M8.5 .5V4.5H12.5" fill="#e9e9e9" stroke="#a3a3a3" stroke-width=".8"/></svg>
<svg style="left:302px;top:383px" width="16" height="8" viewBox="0 0 16 8"><defs><linearGradient id="gb2" x1="0" y1="0" x2="0" y2="1"><stop offset="0" stop-color="#c0922e"/><stop offset="1" stop-color="#8f6610"/></linearGradient></defs><rect x=".4" y=".4" width="15.2" height="7.2" rx="1.6" fill="url(#gb2)" stroke="#7f5a10" stroke-width=".8"/><text x="8" y="6.8" text-anchor="middle" font-family="Liberation Sans,sans-serif" font-weight="bold" font-size="7.8" fill="#fffbe8" textLength="12.6" lengthAdjust="spacingAndGlyphs">VOB</text></svg>
<div class="r" style="top:376px"><div class="fn">VIDEO_TS.VOB</div><div class="fd">2008/5/6 19:23</div><div class="ft">媒体文件 (.vob)</div><div class="fs" style="letter-spacing:0.33px">122 KB</div></div>
<svg style="left:304px;top:398px" width="13" height="16" viewBox="0 0 13 16"><path d="M.5.5H8.5L12.5 4.5V15.5H.5Z" fill="#f9f9f9" stroke="#a3a3a3"/><path d="M8.5 .5V4.5H12.5" fill="#e9e9e9" stroke="#a3a3a3" stroke-width=".8"/></svg>
<div class="r" style="top:397px"><div class="fn">VTS_01_0.BUP</div><div class="fd">2008/5/6 19:32</div><div class="ft">BUP 文件</div><div class="fs" style="letter-spacing:0.45px">70 KB</div></div>
<svg style="left:304px;top:419px" width="13" height="16" viewBox="0 0 13 16"><path d="M.5.5H8.5L12.5 4.5V15.5H.5Z" fill="#f9f9f9" stroke="#a3a3a3"/><path d="M8.5 .5V4.5H12.5" fill="#e9e9e9" stroke="#a3a3a3" stroke-width=".8"/></svg>
<svg style="left:302px;top:425px" width="16" height="8" viewBox="0 0 16 8"><defs><linearGradient id="gb4" x1="0" y1="0" x2="0" y2="1"><stop offset="0" stop-color="#c0922e"/><stop offset="1" stop-color="#8f6610"/></linearGradient></defs><rect x=".4" y=".4" width="15.2" height="7.2" rx="1.6" fill="url(#gb4)" stroke="#7f5a10" stroke-width=".8"/><text x="8" y="6.8" text-anchor="middle" font-family="Liberation Sans,sans-serif" font-weight="bold" font-size="7.8" fill="#fffbe8" textLength="12.6" lengthAdjust="spacingAndGlyphs">IFO</text></svg>
<div class="r" style="top:418px"><div class="fn">VTS_01_0.IFO</div><div class="fd">2008/5/6 19:32</div><div class="ft">媒体文件 (.ifo)</div><div class="fs" style="letter-spacing:0.45px">70 KB</div></div>
<svg style="left:304px;top:440px" width="13" height="16" viewBox="0 0 13 16"><path d="M.5.5H8.5L12.5 4.5V15.5H.5Z" fill="#f9f9f9" stroke="#a3a3a3"/><path d="M8.5 .5V4.5H12.5" fill="#e9e9e9" stroke="#a3a3a3" stroke-width=".8"/></svg>
<svg style="left:302px;top:446px" width="16" height="8" viewBox="0 0 16 8"><defs><linearGradient id="gb5" x1="0" y1="0" x2="0" y2="1"><stop offset="0" stop-color="#c0922e"/><stop offset="1" stop-color="#8f6610"/></linearGradient></defs><rect x=".4" y=".4" width="15.2" height="7.2" rx="1.6" fill="url(#gb5)" stroke="#7f5a10" stroke-width=".8"/><text x="8" y="6.8" text-anchor="middle" font-family="Liberation Sans,sans-serif" font-weight="bold" font-size="7.8" fill="#fffbe8" textLength="12.6" lengthAdjust="spacingAndGlyphs">VOB</text></svg>
<div class="r" style="top:439px"><div class="fn">VTS_01_0.VOB</div><div class="fd">2008/5/6 19:23</div><div class="ft">媒体文件 (.vob)</div><div class="fs" style="letter-spacing:0.31px">16,196 KB</div></div>
<svg style="left:304px;top:461px" width="13" height="16" viewBox="0 0 13 16"><path d="M.5.5H8.5L12.5 4.5V15.5H.5Z" fill="#f9f9f9" stroke="#a3a3a3"/><path d="M8.5 .5V4.5H12.5" fill="#e9e9e9" stroke="#a3a3a3" stroke-width=".8"/></svg>
<svg style="left:302px;top:467px" width="16" height="8" viewBox="0 0 16 8"><defs><linearGradient id="gb6" x1="0" y1="0" x2="0" y2="1"><stop offset="0" stop-color="#c0922e"/><stop offset="1" stop-color="#8f6610"/></linearGradient></defs><rect x=".4" y=".4" width="15.2" height="7.2" rx="1.6" fill="url(#gb6)" stroke="#7f5a10" stroke-width=".8"/><text x="8" y="6.8" text-anchor="middle" font-family="Liberation Sans,sans-serif" font-weight="bold" font-size="7.8" fill="#fffbe8" textLength="12.6" lengthAdjust="spacingAndGlyphs">VOB</text></svg>
<div class="r" style="top:460px"><div class="fn">VTS_01_1.VOB</div><div class="fd">2008/5/6 19:26</div><div class="ft">媒体文件 (.vob)</div><div class="fs" style="letter-spacing:0.10px">1,048,574...</div></div>
<svg style="left:304px;top:482px" width="13" height="16" viewBox="0 0 13 16"><path d="M.5.5H8.5L12.5 4.5V15.5H.5Z" fill="#f9f9f9" stroke="#a3a3a3"/><path d="M8.5 .5V4.5H12.5" fill="#e9e9e9" stroke="#a3a3a3" stroke-width=".8"/></svg>
<svg style="left:302px;top:488px" width="16" height="8" viewBox="0 0 16 8"><defs><linearGradient id="gb7" x1="0" y1="0" x2="0" y2="1"><stop offset="0" stop-color="#c0922e"/><stop offset="1" stop-color="#8f6610"/></linearGradient></defs><rect x=".4" y=".4" width="15.2" height="7.2" rx="1.6" fill="url(#gb7)" stroke="#7f5a10" stroke-width=".8"/><text x="8" y="6.8" text-anchor="middle" font-family="Liberation Sans,sans-serif" font-weight="bold" font-size="7.8" fill="#fffbe8" textLength="12.6" lengthAdjust="spacingAndGlyphs">VOB</text></svg>
<div class="r" style="top:481px"><div class="fn">VTS_01_2.VOB</div><div class="fd">2008/5/6 19:29</div><div class="ft">媒体文件 (.vob)</div><div class="fs" style="letter-spacing:0.10px">1,048,574...</div></div>
<svg style="left:304px;top:503px" width="13" height="16" viewBox="0 0 13 16"><path d="M.5.5H8.5L12.5 4.5V15.5H.5Z" fill="#f9f9f9" stroke="#a3a3a3"/><path d="M8.5 .5V4.5H12.5" fill="#e9e9e9" stroke="#a3a3a3" stroke-width=".8"/></svg>
<svg style="left:302px;top:509px" width="16" height="8" viewBox="0 0 16 8"><defs><linearGradient id="gb8" x1="0" y1="0" x2="0" y2="1"><stop offset="0" stop-color="#c0922e"/><stop offset="1" stop-color="#8f6610"/></linearGradient></defs><rect x=".4" y=".4" width="15.2" height="7.2" rx="1.6" fill="url(#gb8)" stroke="#7f5a10" stroke-width=".8"/><text x="8" y="6.8" text-anchor="middle" font-family="Liberation Sans,sans-serif" font-weight="bold" font-size="7.8" fill="#fffbe8" textLength="12.6" lengthAdjust="spacingAndGlyphs">VOB</text></svg>
<div class="r" style="top:502px"><div class="fn">VTS_01_3.VOB</div><div class="fd">2008/5/6 19:31</div><div class="ft">媒体文件 (.vob)</div><div class="fs" style="letter-spacing:0.10px">1,048,574...</div></div>
<svg style="left:304px;top:524px" width="13" height="16" viewBox="0 0 13 16"><path d="M.5.5H8.5L12.5 4.5V15.5H.5Z" fill="#f9f9f9" stroke="#a3a3a3"/><path d="M8.5 .5V4.5H12.5" fill="#e9e9e9" stroke="#a3a3a3" stroke-width=".8"/></svg>
<svg style="left:302px;top:530px" width="16" height="8" viewBox="0 0 16 8"><defs><linearGradient id="gb9" x1="0" y1="0" x2="0" y2="1"><stop offset="0" stop-color="#c0922e"/><stop offset="1" stop-color="#8f6610"/></linearGradient></defs><rect x=".4" y=".4" width="15.2" height="7.2" rx="1.6" fill="url(#gb9)" stroke="#7f5a10" stroke-width=".8"/><text x="8" y="6.8" text-anchor="middle" font-family="Liberation Sans,sans-serif" font-weight="bold" font-size="7.8" fill="#fffbe8" textLength="12.6" lengthAdjust="spacingAndGlyphs">VOB</text></svg>
<div class="r" style="top:523px"><div class="fn">VTS_01_4.VOB</div><div class="fd">2008/5/6 19:32</div><div class="ft">媒体文件 (.vob)</div><div class="fs" style="letter-spacing:0.31px">936,600 KB</div></div>
<svg style="left:304px;top:545px" width="13" height="16" viewBox="0 0 13 16"><path d="M.5.5H8.5L12.5 4.5V15.5H.5Z" fill="#f9f9f9" stroke="#a3a3a3"/><path d="M8.5 .5V4.5H12.5" fill="#e9e9e9" stroke="#a3a3a3" stroke-width=".8"/></svg>
<div class="r" style="top:544px"><div class="fn">VTS_02_0.BUP</div><div class="fd">2008/5/6 19:32</div><div class="ft">BUP 文件</div><div class="fs" style="letter-spacing:0.45px">70 KB</div></div>
<svg style="left:304px;top:566px" width="13" height="16" viewBox="0 0 13 16"><path d="M.5.5H8.5L12.5 4.5V15.5H.5Z" fill="#f9f9f9" stroke="#a3a3a3"/><path d="M8.5 .5V4.5H12.5" fill="#e9e9e9" stroke="#a3a3a3" stroke-width=".8"/></svg>
<svg style="left:302px;top:572px" width="16" height="8" viewBox="0 0 16 8"><defs><linearGradient id="gb11" x1="0" y1="0" x2="0" y2="1"><stop offset="0" stop-color="#c0922e"/><stop offset="1" stop-color="#8f6610"/></linearGradient></defs><rect x=".4" y=".4" width="15.2" height="7.2" rx="1.6" fill="url(#gb11)" stroke="#7f5a10" stroke-width=".8"/><text x="8" y="6.8" text-anchor="middle" font-family="Liberation Sans,sans-serif" font-weight="bold" font-size="7.8" fill="#fffbe8" textLength="12.6" lengthAdjust="spacingAndGlyphs">IFO</text></svg>
<div class="r" style="top:565px"><div class="fn">VTS_02_0.IFO</div><div class="fd">2008/5/6 19:32</div><div class="ft">媒体文件 (.ifo)</div><div class="fs" style="letter-spacing:0.49px">0 KB</div></div>
<svg style="left:304px;top:587px" width="13" height="16" viewBox="0 0 13 16"><path d="M.5.5H8.5L12.5 4.5V15.5H.5Z" fill="#f9f9f9" stroke="#a3a3a3"/><path d="M8.5 .5V4.5H12.5" fill="#e9e9e9" stroke="#a3a3a3" stroke-width=".8"/></svg>
<svg style="left:302px;top:593px" width="16" height="8" viewBox="0 0 16 8"><defs><linearGradient id="gb12" x1="0" y1="0" x2="0" y2="1"><stop offset="0" stop-color="#c0922e"/><stop offset="1" stop-color="#8f6610"/></linearGradient></defs><rect x=".4" y=".4" width="15.2" height="7.2" rx="1.6" fill="url(#gb12)" stroke="#7f5a10" stroke-width=".8"/><text x="8" y="6.8" text-anchor="middle" font-family="Liberation Sans,sans-serif" font-weight="bold" font-size="7.8" fill="#fffbe8" textLength="12.6" lengthAdjust="spacingAndGlyphs">VOB</text></svg>
<div class="r" style="top:586px"><div class="fn">VTS_02_0.VOB</div><div class="fd">2008/5/6 19:23</div><div class="ft">媒体文件 (.vob)</div><div class="fs" style="letter-spacing:0.31px">16,196 KB</div></div>
<svg style="left:304px;top:608px" width="13" height="16" viewBox="0 0 13 16"><path d="M.5.5H8.5L12.5 4.5V15.5H.5Z" fill="#f9f9f9" stroke="#a3a3a3"/><path d="M8.5 .5V4.5H12.5" fill="#e9e9e9" stroke="#a3a3a3" stroke-width=".8"/></svg>
<svg style="left:302px;top:614px" width="16" height="8" viewBox="0 0 16 8"><defs><linearGradient id="gb13" x1="0" y1="0" x2="0" y2="1"><stop offset="0" stop-color="#c0922e"/><stop offset="1" stop-color="#8f6610"/></linearGradient></defs><rect x=".4" y=".4" width="15.2" height="7.2" rx="1.6" fill="url(#gb13)" stroke="#7f5a10" stroke-width=".8"/><text x="8" y="6.8" text-anchor="middle" font-family="Liberation Sans,sans-serif" font-weight="bold" font-size="7.8" fill="#fffbe8" textLength="12.6" lengthAdjust="spacingAndGlyphs">VOB</text></svg>
<div class="r" style="top:607px"><div class="fn">VTS_02_1.VOB</div><div class="fd">2008/5/6 19:26</div><div class="ft">媒体文件 (.vob)</div><div class="fs" style="letter-spacing:0.10px">1,048,574...</div></div>
<svg style="left:304px;top:629px" width="13" height="16" viewBox="0 0 13 16"><path d="M.5.5H8.5L12.5 4.5V15.5H.5Z" fill="#f9f9f9" stroke="#a3a3a3"/><path d="M8.5 .5V4.5H12.5" fill="#e9e9e9" stroke="#a3a3a3" stroke-width=".8"/></svg>
<svg style="left:302px;top:635px" width="16" height="8" viewBox="0 0 16 8"><defs><linearGradient id="gb14" x1="0" y1="0" x2="0" y2="1"><stop offset="0" stop-color="#c0922e"/><stop offset="1" stop-color="#8f6610"/></linearGradient></defs><rect x=".4" y=".4" width="15.2" height="7.2" rx="1.6" fill="url(#gb14)" stroke="#7f5a10" stroke-width=".8"/><text x="8" y="6.8" text-anchor="middle" font-family="Liberation Sans,sans-serif" font-weight="bold" font-size="7.8" fill="#fffbe8" textLength="12.6" lengthAdjust="spacingAndGlyphs">VOB</text></svg>
<div class="r" style="top:628px"><div class="fn">VTS_02_2.VOB</div><div class="fd">2008/5/6 19:29</div><div class="ft">媒体文件 (.vob)</div><div class="fs" style="letter-spacing:0.10px">1,048,574...</div></div>
<svg style="left:304px;top:650px" width="13" height="16" viewBox="0 0 13 16"><path d="M.5.5H8.5L12.5 4.5V15.5H.5Z" fill="#f9f9f9" stroke="#a3a3a3"/><path d="M8.5 .5V4.5H12.5" fill="#e9e9e9" stroke="#a3a3a3" stroke-width=".8"/></svg>
<svg style="left:302px;top:656px" width="16" height="8" viewBox="0 0 16 8"><defs><linearGradient id="gb15" x1="0" y1="0" x2="0" y2="1"><stop offset="0" stop-color="#c0922e"/><stop offset="1" stop-color="#8f6610"/></linearGradient></defs><rect x=".4" y=".4" width="15.2" height="7.2" rx="1.6" fill="url(#gb15)" stroke="#7f5a10" stroke-width=".8"/><text x="8" y="6.8" text-anchor="middle" font-family="Liberation Sans,sans-serif" font-weight="bold" font-size="7.8" fill="#fffbe8" textLength="12.6" lengthAdjust="spacingAndGlyphs">VOB</text></svg>
<div class="r" style="top:649px"><div class="fn">VTS_02_3.VOB</div><div class="fd">2008/5/6 19:31</div><div class="ft">媒体文件 (.vob)</div><div class="fs" style="letter-spacing:0.10px">1,048,574...</div></div>
<svg style="left:304px;top:671px" width="13" height="16" viewBox="0 0 13 16"><path d="M.5.5H8.5L12.5 4.5V15.5H.5Z" fill="#f9f9f9" stroke="#a3a3a3"/><path d="M8.5 .5V4.5H12.5" fill="#e9e9e9" stroke="#a3a3a3" stroke-width=".8"/></svg>
<svg style="left:302px;top:677px" width="16" height="8" viewBox="0 0 16 8"><defs><linearGradient id="gb16" x1="0" y1="0" x2="0" y2="1"><stop offset="0" stop-color="#c0922e"/><stop offset="1" stop-color="#8f6610"/></linearGradient></defs><rect x=".4" y=".4" width="15.2" height="7.2" rx="1.6" fill="url(#gb16)" stroke="#7f5a10" stroke-width=".8"/><text x="8" y="6.8" text-anchor="middle" font-family="Liberation Sans,sans-serif" font-weight="bold" font-size="7.8" fill="#fffbe8" textLength="12.6" lengthAdjust="spacingAndGlyphs">VOB</text></svg>
<div class="r" style="top:670px"><div class="fn">VTS_02_4.VOB</div><div class="fd">2008/5/6 19:32</div><div class="ft">媒体文件 (.vob)</div><div class="fs" style="letter-spacing:0.31px">936,600 KB</div></div>
<svg style="left:304px;top:692px" width="13" height="16" viewBox="0 0 13 16"><path d="M.5.5H8.5L12.5 4.5V15.5H.5Z" fill="#f9f9f9" stroke="#a3a3a3"/><path d="M8.5 .5V4.5H12.5" fill="#e9e9e9" stroke="#a3a3a3" stroke-width=".8"/></svg>
<div class="r" style="top:691px"><div class="fn">VTS_03_0.BUP</div><div class="fd">2008/5/6 19:32</div><div class="ft">BUP 文件</div><div class="fs" style="letter-spacing:0.45px">70 KB</div></div>
<svg style="left:304px;top:713px" width="13" height="16" viewBox="0 0 13 16"><path d="M.5.5H8.5L12.5 4.5V15.5H.5Z" fill="#f9f9f9" stroke="#a3a3a3"/><path d="M8.5 .5V4.5H12.5" fill="#e9e9e9" stroke="#a3a3a3" stroke-width=".8"/></svg>
<svg style="left:302px;top:719px" width="16" height="8" viewBox="0 0 16 8"><defs><linearGradient id="gb18" x1="0" y1="0" x2="0" y2="1"><stop offset="0" stop-color="#c0922e"/><stop offset="1" stop-color="#8f6610"/></linearGradient></defs><rect x=".4" y=".4" width="15.2" height="7.2" rx="1.6" fill="url(#gb18)" stroke="#7f5a10" stroke-width=".8"/><text x="8" y="6.8" text-anchor="middle" font-family="Liberation Sans,sans-serif" font-weight="bold" font-size="7.8" fill="#fffbe8" textLength="12.6" lengthAdjust="spacingAndGlyphs">IFO</text></svg>
<div class="r" style="top:712px"><div class="fn">VTS_03_0.IFO</div><div class="fd">2008/5/6 19:32</div><div class="ft">媒体文件 (.ifo)</div><div class="fs" style="letter-spacing:0.45px">70 KB</div></div>
<svg style="left:304px;top:734px" width="13" height="16" viewBox="0 0 13 16"><path d="M.5.5H8.5L12.5 4.5V15.5H.5Z" fill="#f9f9f9" stroke="#a3a3a3"/><path d="M8.5 .5V4.5H12.5" fill="#e9e9e9" stroke="#a3a3a3" stroke-width=".8"/></svg>
<svg style="left:302px;top:740px" width="16" height="8" viewBox="0 0 16 8"><defs><linearGradient id="gb19" x1="0" y1="0" x2="0" y2="1"><stop offset="0" stop-color="#c0922e"/><stop offset="1" stop-color="#8f6610"/></linearGradient></defs><rect x=".4" y=".4" width="15.2" height="7.2" rx="1.6" fill="url(#gb19)" stroke="#7f5a10" stroke-width=".8"/><text x="8" y="6.8" text-anchor="middle" font-family="Liberation Sans,sans-serif" font-weight="bold" font-size="7.8" fill="#fffbe8" textLength="12.6" lengthAdjust="spacingAndGlyphs">VOB</text></svg>
<div class="r" style="top:733px"><div class="fn">VTS_03_0.VOB</div><div class="fd">2008/5/6 19:23</div><div class="ft">媒体文件 (.vob)</div><div class="fs" style="letter-spacing:0.31px">16,196 KB</div></div>
<svg style="left:304px;top:755px" width="13" height="16" viewBox="0 0 13 16"><path d="M.5.5H8.5L12.5 4.5V15.5H.5Z" fill="#f9f9f9" stroke="#a3a3a3"/><path d="M8.5 .5V4.5H12.5" fill="#e9e9e9" stroke="#a3a3a3" stroke-width=".8"/></svg>
<svg style="left:302px;top:761px" width="16" height="8" viewBox="0 0 16 8"><defs><linearGradient id="gb20" x1="0" y1="0" x2="0" y2="1"><stop offset="0" stop-color="#c0922e"/><stop offset="1" stop-color="#8f6610"/></linearGradient></defs><rect x=".4" y=".4" width="15.2" height="7.2" rx="1.6" fill="url(#gb20)" stroke="#7f5a10" stroke-width=".8"/><text x="8" y="6.8" text-anchor="middle" font-family="Liberation Sans,sans-serif" font-weight="bold" font-size="7.8" fill="#fffbe8" textLength="12.6" lengthAdjust="spacingAndGlyphs">VOB</text></svg>
<div class="r" style="top:754px"><div class="fn">VTS_03_1.VOB</div><div class="fd">2008/5/6 19:26</div><div class="ft">媒体文件 (.vob)</div><div class="fs" style="letter-spacing:0.10px">1,048,574...</div></div>
<svg style="left:304px;top:776px" width="13" height="16" viewBox="0 0 13 16"><path d="M.5.5H8.5L12.5 4.5V15.5H.5Z" fill="#f9f9f9" stroke="#a3a3a3"/><path d="M8.5 .5V4.5H12.5" fill="#e9e9e9" stroke="#a3a3a3" stroke-width=".8"/></svg>
<svg style="left:302px;top:782px" width="16" height="8" viewBox="0 0 16 8"><defs><linearGradient id="gb21" x1="0" y1="0" x2="0" y2="1"><stop offset="0" stop-color="#c0922e"/><stop offset="1" stop-color="#8f6610"/></linearGradient></defs><rect x=".4" y=".4" width="15.2" height="7.2" rx="1.6" fill="url(#gb21)" stroke="#7f5a10" stroke-width=".8"/><text x="8" y="6.8" text-anchor="middle" font-family="Liberation Sans,sans-serif" font-weight="bold" font-size="7.8" fill="#fffbe8" textLength="12.6" lengthAdjust="spacingAndGlyphs">VOB</text></svg>
<div class="r" style="top:775px"><div class="fn">VTS_03_2.VOB</div><div class="fd">2008/5/6 19:29</div><div class="ft">媒体文件 (.vob)</div><div class="fs" style="letter-spacing:0.10px">1,048,574...</div></div>
<svg style="left:304px;top:797px" width="13" height="16" viewBox="0 0 13 16"><path d="M.5.5H8.5L12.5 4.5V15.5H.5Z" fill="#f9f9f9" stroke="#a3a3a3"/><path d="M8.5 .5V4.5H12.5" fill="#e9e9e9" stroke="#a3a3a3" stroke-width=".8"/></svg>
<svg style="left:302px;top:803px" width="16" height="8" viewBox="0 0 16 8"><defs><linearGradient id="gb22" x1="0" y1="0" x2="0" y2="1"><stop offset="0" stop-color="#c0922e"/><stop offset="1" stop-color="#8f6610"/></linearGradient></defs><rect x=".4" y=".4" width="15.2" height="7.2" rx="1.6" fill="url(#gb22)" stroke="#7f5a10" stroke-width=".8"/><text x="8" y="6.8" text-anchor="middle" font-family="Liberation Sans,sans-serif" font-weight="bold" font-size="7.8" fill="#fffbe8" textLength="12.6" lengthAdjust="spacingAndGlyphs">VOB</text></svg>
<div class="r" style="top:796px"><div class="fn">VTS_03_3.VOB</div><div class="fd">2008/5/6 19:31</div><div class="ft">媒体文件 (.vob)</div><div class="fs" style="letter-spacing:0.10px">1,048,574...</div></div>
<svg style="left:304px;top:818px" width="13" height="16" viewBox="0 0 13 16"><path d="M.5.5H8.5L12.5 4.5V15.5H.5Z" fill="#f9f9f9" stroke="#a3a3a3"/><path d="M8.5 .5V4.5H12.5" fill="#e9e9e9" stroke="#a3a3a3" stroke-width=".8"/></svg>
<svg style="left:302px;top:824px" width="16" height="8" viewBox="0 0 16 8"><defs><linearGradient id="gb23" x1="0" y1="0" x2="0" y2="1"><stop offset="0" stop-color="#c0922e"/><stop offset="1" stop-color="#8f6610"/></linearGradient></defs><rect x=".4" y=".4" width="15.2" height="7.2" rx="1.6" fill="url(#gb23)" stroke="#7f5a10" stroke-width=".8"/><text x="8" y="6.8" text-anchor="middle" font-family="Liberation Sans,sans-serif" font-weight="bold" font-size="7.8" fill="#fffbe8" textLength="12.6" lengthAdjust="spacingAndGlyphs">VOB</text></svg>
<div class="r" style="top:817px"><div class="fn">VTS_03_4.VOB</div><div class="fd">2008/5/6 19:32</div><div class="ft">媒体文件 (.vob)</div><div class="fs" style="letter-spacing:0.31px">936,600 KB</div></div>
<svg style="left:304px;top:839px" width="13" height="16" viewBox="0 0 13 16"><path d="M.5.5H8.5L12.5 4.5V15.5H.5Z" fill="#f9f9f9" stroke="#a3a3a3"/><path d="M8.5 .5V4.5H12.5" fill="#e9e9e9" stroke="#a3a3a3" stroke-width=".8"/></svg>
<div class="r" style="top:838px"><div class="fn">VTS_04_0.BUP</div><div class="fd">2008/5/6 19:32</div><div class="ft">BUP 文件</div><div class="fs" style="letter-spacing:0.45px">70 KB</div></div>
<svg style="left:304px;top:860px" width="13" height="16" viewBox="0 0 13 16"><path d="M.5.5H8.5L12.5 4.5V15.5H.5Z" fill="#f9f9f9" stroke="#a3a3a3"/><path d="M8.5 .5V4.5H12.5" fill="#e9e9e9" stroke="#a3a3a3" stroke-width=".8"/></svg>
<svg style="left:302px;top:866px" width="16" height="8" viewBox="0 0 16 8"><defs><linearGradient id="gb25" x1="0" y1="0" x2="0" y2="1"><stop offset="0" stop-color="#c0922e"/><stop offset="1" stop-color="#8f6610"/></linearGradient></defs><rect x=".4" y=".4" width="15.2" height="7.2" rx="1.6" fill="url(#gb25)" stroke="#7f5a10" stroke-width=".8"/><text x="8" y="6.8" text-anchor="middle" font-family="Liberation Sans,sans-serif" font-weight="bold" font-size="7.8" fill="#fffbe8" textLength="12.6" lengthAdjust="spacingAndGlyphs">IFO</text></svg>
<div class="r" style="top:859px"><div class="fn">VTS_04_0.IFO</div><div class="fd">2008/5/6 19:32</div><div class="ft">媒体文件 (.ifo)</div><div class="fs" style="letter-spacing:0.45px">70 KB</div></div>
<svg style="left:304px;top:881px" width="13" height="16" viewBox="0 0 13 16"><path d="M.5.5H8.5L12.5 4.5V15.5H.5Z" fill="#f9f9f9" stroke="#a3a3a3"/><path d="M8.5 .5V4.5H12.5" fill="#e9e9e9" stroke="#a3a3a3" stroke-width=".8"/></svg>
<svg style="left:302px;top:887px" width="16" height="8" viewBox="0 0 16 8"><defs><linearGradient id="gb26" x1="0" y1="0" x2="0" y2="1"><stop offset="0" stop-color="#c0922e"/><stop offset="1" stop-color="#8f6610"/></linearGradient></defs><rect x=".4" y=".4" width="15.2" height="7.2" rx="1.6" fill="url(#gb26)" stroke="#7f5a10" stroke-width=".8"/><text x="8" y="6.8" text-anchor="middle" font-family="Liberation Sans,sans-serif" font-weight="bold" font-size="7.8" fill="#fffbe8" textLength="12.6" lengthAdjust="spacingAndGlyphs">VOB</text></svg>
<div class="r" style="top:880px"><div class="fn">VTS_04_0.VOB</div><div class="fd">2008/5/6 19:23</div><div class="ft">媒体文件 (.vob)</div><div class="fs" style="letter-spacing:0.31px">16,196 KB</div></div>
</div></div>
<div class="a" style="left:100px;top:898px;width:1062px;height:59px;background:#f1f3fb;border-top:1px solid #ccd9ea"></div>
<svg style="left:120px;top:900px" width="52" height="56" viewBox="0 0 52 56"><defs><linearGradient id="bf1" x1="0" y1="0" x2="1" y2="0"><stop offset="0" stop-color="#f0db88"/><stop offset="1" stop-color="#f6e8a6"/></linearGradient><linearGradient id="bf2" x1="0" y1="0" x2="1" y2="0"><stop offset="0" stop-color="#ecd37a"/><stop offset="1" stop-color="#dcbd5c"/></linearGradient><linearGradient id="bsh" x1="0" y1="0" x2="1" y2="0"><stop offset="0" stop-color="#c9ced8" stop-opacity=".8"/><stop offset="1" stop-color="#e6eaf2" stop-opacity="0"/></linearGradient></defs><path d="M33 36L50 47L33 49Z" fill="url(#bsh)"/><path d="M2.3 2.5L32.3 8V46.6L10.7 46Z" fill="url(#bf1)" stroke="#d9bf66" stroke-width=".6"/><rect x="30.6" y="31" width="3.2" height="15" fill="#f7f6ee" stroke="#b7bcc6" stroke-width=".5"/><rect x="32.2" y="40" width="1.4" height="5" fill="#7da4d6"/><path d="M2.3 2.5L12.6 9L10.7 52.2L2.3 44.7Z" fill="url(#bf2)" stroke="#c9aa4e" stroke-width=".6"/></svg>
<div class="t" style="left:185px;top:906px;font-size:13px;color:#1e395b;letter-spacing:0.53px">696 个对象</div>
</body></html>
